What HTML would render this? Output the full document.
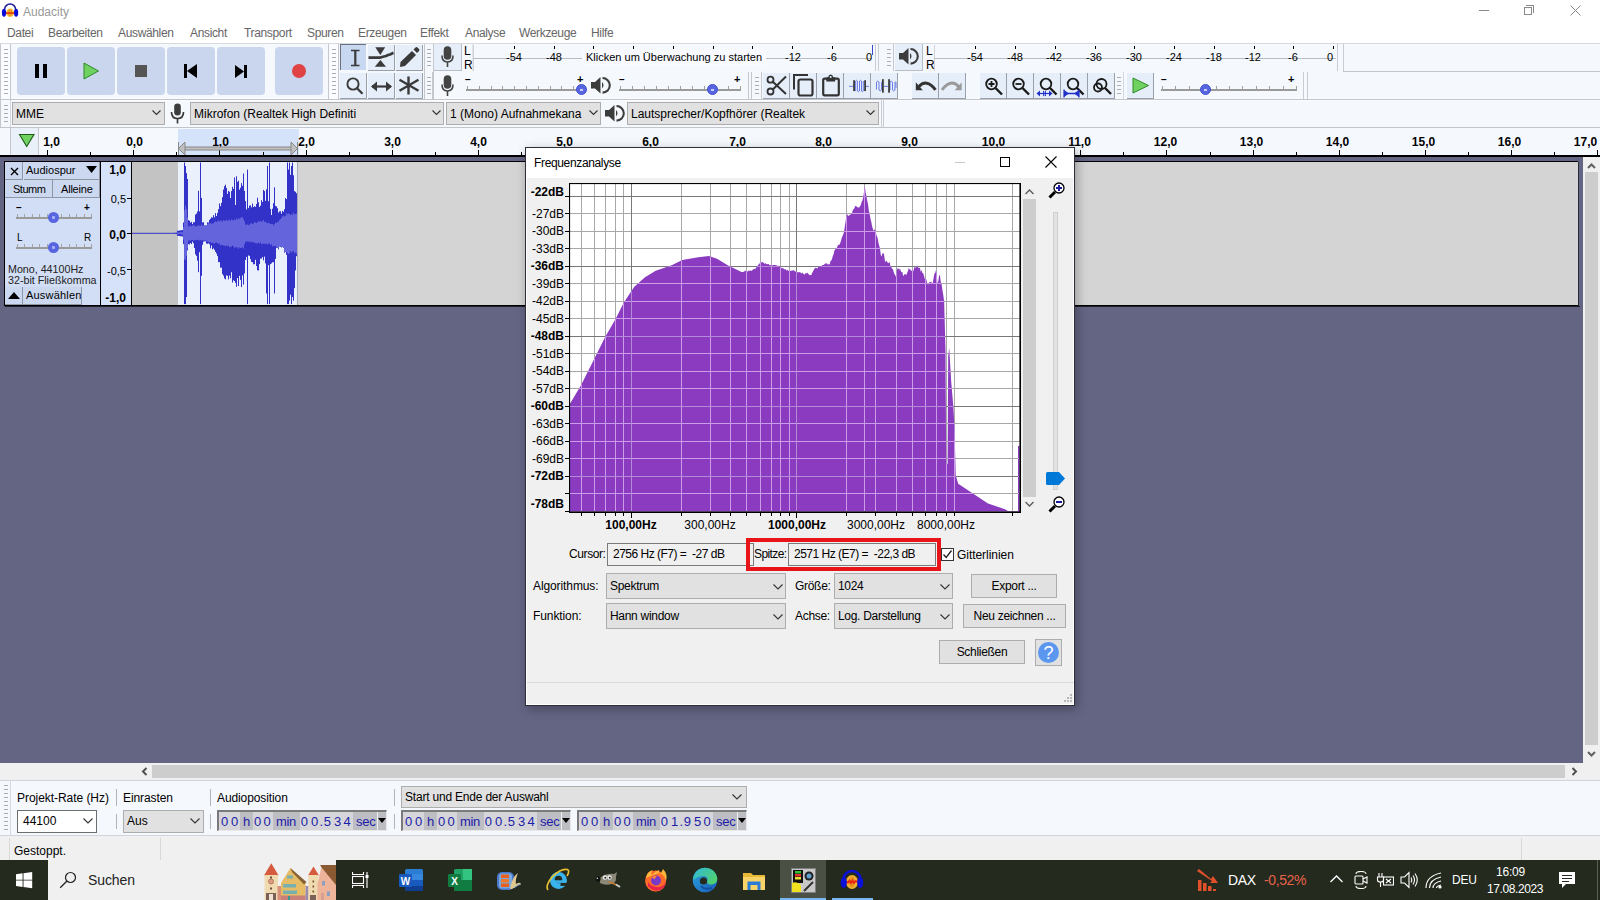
<!DOCTYPE html>
<html><head><meta charset="utf-8">
<style>

*{margin:0;padding:0;box-sizing:border-box}
html,body{width:1600px;height:900px;overflow:hidden;background:#fff;font-family:"Liberation Sans",sans-serif;font-size:12px;color:#000}
.a{position:absolute}
.t{position:absolute;white-space:nowrap;line-height:1}
#title{left:0;top:0;width:1600px;height:22px;background:#fff}
#menu{left:0;top:22px;width:1600px;height:21px;background:#fff}
#tb{left:0;top:43px;width:1600px;height:85px;background:#f5f8fd;border-top:1px solid #d6d9de}
#ruler{left:0;top:128px;width:1600px;height:27px;background:#f5f8fd}
#trackarea{left:0;top:155px;width:1583px;height:608px;background:#636583}
#hscroll{left:0;top:763px;width:1600px;height:17px;background:#f0f0f0}
#selbar{left:0;top:780px;width:1600px;height:58px;background:#f5f8fd;border-top:1px solid #d6d9de}
#status{left:0;top:838px;width:1600px;height:22px;background:#f0f0f0;border-top:1px solid #d9d9d9}
#taskbar{left:0;top:860px;width:1600px;height:40px;background:#20281b}
.btn{position:absolute;background:#c9d6ee;border-radius:4px}
.grab{position:absolute;width:4px;background:repeating-linear-gradient(to bottom,#aaaeb4 0,#aaaeb4 1px,transparent 1px,transparent 4px)}
.combo{position:absolute;background:#e5e5e5;border:1px solid #adadad}
.combo .ar{position:absolute;right:6px;top:50%;width:7px;height:7px;border-right:1px solid #333;border-bottom:1px solid #333;transform:translateY(-70%) rotate(45deg)}
.sep{position:absolute;width:1px;background:#c4c8ce}
.rt{position:absolute;font-weight:bold;font-size:12px;line-height:1}
.tk{position:absolute;width:1px;background:#000}

</style></head><body>


<!-- TITLE BAR -->
<div id="title" class="a">
  <svg class="a" style="left:0;top:0" width="22" height="20">
    <path d="M4.6 9.5 A5.5 5.5 0 0 1 15.6 9.5" fill="none" stroke="#1c1c9a" stroke-width="1.5"/>
    <ellipse cx="10.1" cy="12.7" rx="4" ry="4.3" fill="#f8c040"/>
    <ellipse cx="10.1" cy="12.7" rx="2.2" ry="3.6" fill="#f0a020"/>
    <rect x="6" y="12.3" width="8.2" height="1.6" fill="#e83010"/>
    <ellipse cx="4" cy="12.8" rx="2.1" ry="4" fill="#0a0ad8"/>
    <ellipse cx="16.1" cy="12.8" rx="2.1" ry="4" fill="#0a0ad8"/>
  </svg>
  <div class="t" style="left:23px;top:6px;color:#999">Audacity</div>
  <div class="a" style="left:1479px;top:10px;width:10px;height:1px;background:#8a8a8a"></div>
  <div class="a" style="left:1524px;top:7px;width:8px;height:8px;border:1px solid #8a8a8a"></div>
  <div class="a" style="left:1526px;top:5px;width:8px;height:8px;border-top:1px solid #8a8a8a;border-right:1px solid #8a8a8a"></div>
  <svg class="a" style="left:1570px;top:5px" width="11" height="11"><path d="M0.5 0.5L10.5 10.5M10.5 0.5L0.5 10.5" stroke="#8a8a8a" stroke-width="1"/></svg>
</div>

<!-- MENU -->
<div id="menu" class="a" style="color:#666;letter-spacing:-0.35px">
  <div class="t" style="left:7px;top:5px">Datei</div>
  <div class="t" style="left:48px;top:5px">Bearbeiten</div>
  <div class="t" style="left:118px;top:5px">Auswählen</div>
  <div class="t" style="left:190px;top:5px">Ansicht</div>
  <div class="t" style="left:244px;top:5px">Transport</div>
  <div class="t" style="left:307px;top:5px">Spuren</div>
  <div class="t" style="left:358px;top:5px">Erzeugen</div>
  <div class="t" style="left:420px;top:5px">Effekt</div>
  <div class="t" style="left:465px;top:5px">Analyse</div>
  <div class="t" style="left:519px;top:5px">Werkzeuge</div>
  <div class="t" style="left:591px;top:5px">Hilfe</div>
</div>


<div id="tb" class="a"></div>
<div id="ruler" class="a"></div>
<div id="trackarea" class="a"></div>
<div id="hscroll" class="a"></div>
<div id="selbar" class="a"></div>

<div id="taskbar" class="a"></div>
<div id="tbc" class="a" style="left:0;top:0">
  <!-- row separator lines -->
  <div class="a" style="left:0;top:98px;width:1600px;height:3px;background:#fafcff;border-top:1px solid #fafcff"></div>
  <div class="a" style="left:0;top:99px;width:1600px;height:1px;background:#c2c5ca"></div>
  <div class="a" style="left:1343px;top:71px;width:257px;height:1px;background:#c2c5ca"></div>
  <div class="a" style="left:0;top:127px;width:1600px;height:1px;background:#c2c5ca"></div>
  <!-- transport -->
  <div class="sep" style="left:0;top:44px;height:84px"></div>
  <div class="sep" style="left:328px;top:44px;height:55px"></div>
  <div class="sep" style="left:424px;top:44px;height:55px"></div>
  <div class="a" style="left:329px;top:44px;width:9px;height:55px;background:#fafcff"></div>
  <div class="a" style="left:1px;top:44px;width:9px;height:55px;background:#fafcff"></div>
  <div class="grab" style="left:4px;top:49px;height:46px"></div>
  <div class="sep" style="left:10px;top:44px;height:55px"></div>
  <div class="btn" style="left:17px;top:47px;width:48px;height:48px"></div>
  <div class="btn" style="left:67px;top:47px;width:48px;height:48px"></div>
  <div class="btn" style="left:117px;top:47px;width:48px;height:48px"></div>
  <div class="btn" style="left:167px;top:47px;width:48px;height:48px"></div>
  <div class="btn" style="left:217px;top:47px;width:48px;height:48px"></div>
  <div class="btn" style="left:275px;top:47px;width:48px;height:48px"></div>
  <div class="a" style="left:35px;top:64px;width:4px;height:14px;background:#000"></div>
  <div class="a" style="left:43px;top:64px;width:4px;height:14px;background:#000"></div>
  <svg class="a" style="left:83px;top:62px" width="17" height="18"><path d="M1 1L1 17L15.5 9Z" fill="#6fd160" stroke="#2f8a2a" stroke-width="1"/></svg>
  <div class="a" style="left:135px;top:65px;width:12px;height:12px;background:#555"></div>
  <div class="a" style="left:184px;top:64px;width:3px;height:14px;background:#000"></div>
  <svg class="a" style="left:186px;top:64px" width="12" height="14"><path d="M11 0L11 14L1 7Z" fill="#000"/></svg>
  <svg class="a" style="left:235px;top:65px" width="10" height="13"><path d="M0 0L0 13L9 6.5Z" fill="#000"/></svg>
  <div class="a" style="left:244px;top:65px;width:3px;height:13px;background:#000"></div>
  <div class="a" style="left:292px;top:64px;width:14px;height:14px;border-radius:50%;background:#e04343"></div>
  <!-- tools -->
  <div class="grab" style="left:332px;top:49px;height:46px"></div>
  <div class="sep" style="left:338px;top:44px;height:55px"></div>
  <div class="a" style="left:340px;top:44px;width:26px;height:26px;background:#c8d8f0;border-top:1px solid #6a7080;border-left:1px solid #6a7080"></div>
  <div class="a" style="left:368px;top:45px;width:27px;height:26px;background:#e6eefa;border-right:1px solid #9aa0aa;border-bottom:1px solid #9aa0aa"></div>
  <div class="a" style="left:396px;top:45px;width:27px;height:26px;background:#e6eefa;border-right:1px solid #9aa0aa;border-bottom:1px solid #9aa0aa"></div>
  <div class="a" style="left:340px;top:73px;width:27px;height:26px;background:#e6eefa;border-right:1px solid #9aa0aa;border-bottom:1px solid #9aa0aa"></div>
  <div class="a" style="left:368px;top:73px;width:27px;height:26px;background:#e6eefa;border-right:1px solid #9aa0aa;border-bottom:1px solid #9aa0aa"></div>
  <div class="a" style="left:396px;top:73px;width:27px;height:26px;background:#e6eefa;border-right:1px solid #9aa0aa;border-bottom:1px solid #9aa0aa"></div>
  <svg class="a" style="left:340px;top:44px" width="84" height="56">
    <g fill="#3a3a3a" stroke="#3a3a3a">
      <path d="M11 6.5H19.5M11 21.5H19.5" stroke-width="1.4" fill="none"/>
      <rect x="14.2" y="6" width="2.2" height="16" stroke="none"/>
      <path d="M35.3 3.3H45.2L40.3 11Z" stroke="none"/>
      <path d="M34.8 22.8H46L40.4 16Z" stroke="none"/>
      <path d="M28.5 13.6H40.5L42 13L44 12.5L46 12L48 11L50 10.5L52 9.5L53.5 8.8" stroke-width="2.6" fill="none" stroke-linejoin="bevel"/>
      <path d="M60 23L60.5 18L72 7L76 11L65 22Z" stroke="none"/><path d="M73.5 5.5L75.5 3.5Q76.5 2.5 77.5 3.5L79 5Q80 6 79 7L77 9Z" stroke="none"/>
      <circle cx="13" cy="40" r="5.6" fill="none" stroke-width="1.9"/>
      <path d="M17 44.2L22.5 49.7" stroke-width="2.3"/>
      <path d="M32 42.5H51" stroke-width="2.2" fill="none"/>
      <path d="M31 42.5L37 37.5V47.5Z M52 42.5L46 37.5V47.5Z" stroke="none"/>
      <path d="M68.5 32.5V50.5M59.5 35.8L78.5 46.8M78.5 35.8L59.5 46.8" stroke-width="2.4" fill="none"/>
    </g>
  </svg>
  <!-- record meter -->
  <div class="grab" style="left:427px;top:49px;height:20px"></div>
  <div class="grab" style="left:427px;top:77px;height:20px"></div>
  <div class="sep" style="left:433px;top:44px;height:55px"></div>
  <div class="a" style="left:434px;top:44px;width:28px;height:27px;background:#e6eefa;border-right:1px solid #b8bec8;border-bottom:1px solid #b8bec8"></div>
  <svg class="a" style="left:440px;top:46px" width="16" height="22"><g fill="none" stroke="#444" stroke-width="1.6"><rect x="4.5" y="1" width="6" height="12" rx="3" fill="#444"/><path d="M2 9.5Q2 16 7.5 16Q13 16 13 9.5"/><path d="M7.5 16V21"/></g></svg>
  <svg class="a" style="left:440px;top:75px" width="16" height="22"><g fill="none" stroke="#444" stroke-width="1.6"><rect x="4.5" y="1" width="6" height="12" rx="3" fill="#444"/><path d="M2 9.5Q2 16 7.5 16Q13 16 13 9.5"/><path d="M7.5 16V21"/></g></svg>
  <div class="t" style="left:464px;top:45px;font-size:12px">L</div>
  <div class="t" style="left:464px;top:59px;font-size:12px">R</div>
  <div class="a" style="left:472px;top:44px;width:1px;height:27px;background:#e0e4ea"></div>
  <div class="a" style="left:473px;top:45px;width:400px;height:13px;border-left:1px solid #d0d4da"></div>
  <div class="a" style="left:473px;top:58px;width:109px;height:1px;background:#b8bcc4"></div>
  <div class="a" style="left:473px;top:59px;width:400px;height:12px;border-left:1px solid #d0d4da"></div>
  <div class="a" style="left:766px;top:58px;width:106px;height:1px;background:#b8bcc4"></div>
  <div class="a" style="left:582px;top:50px;width:184px;height:16px;background:#f8faff"></div>
  <div class="t" style="left:586px;top:52px;font-size:11px">Klicken um Überwachung zu starten</div>
  <div class="a" style="left:514px;top:46px;width:1px;height:3px;background:#000"></div><div class="t" style="left:494px;top:52px;width:40px;text-align:center;font-size:11px">-54</div><div class="a" style="left:554px;top:46px;width:1px;height:3px;background:#000"></div><div class="t" style="left:534px;top:52px;width:40px;text-align:center;font-size:11px">-48</div><div class="a" style="left:593px;top:46px;width:1px;height:3px;background:#000"></div><div class="a" style="left:633px;top:46px;width:1px;height:3px;background:#000"></div><div class="a" style="left:673px;top:46px;width:1px;height:3px;background:#000"></div><div class="a" style="left:713px;top:46px;width:1px;height:3px;background:#000"></div><div class="a" style="left:752px;top:46px;width:1px;height:3px;background:#000"></div><div class="a" style="left:792px;top:46px;width:1px;height:3px;background:#000"></div><div class="t" style="left:773px;top:52px;width:40px;text-align:center;font-size:11px">-12</div><div class="a" style="left:832px;top:46px;width:1px;height:3px;background:#000"></div><div class="t" style="left:812px;top:52px;width:40px;text-align:center;font-size:11px">-6</div><div class="a" style="left:872px;top:46px;width:1px;height:3px;background:#000"></div><div class="t" style="left:849px;top:52px;width:40px;text-align:center;font-size:11px">0</div>
  <div class="a" style="left:872px;top:45px;width:1px;height:10px;background:#3a46d0"></div>
  <div class="a" style="left:875px;top:44px;width:1px;height:27px;background:#c8ccd4"></div>
  <div class="a" style="left:878px;top:44px;width:1px;height:27px;background:#c8ccd4"></div>
  <!-- play meter -->
  <div class="grab" style="left:887px;top:49px;height:20px"></div>
  <div class="sep" style="left:893px;top:44px;height:27px"></div>
  <div class="a" style="left:895px;top:44px;width:28px;height:27px;background:#e6eefa;border-right:1px solid #b8bec8;border-bottom:1px solid #b8bec8"></div>
  <svg class="a" style="left:898px;top:47px" width="22" height="20"><path d="M1 6H5L10.5 1V17.5L5 12.5H1Z" fill="#3c3c3c"/><path d="M12 6Q15 9.2 12 12.5Z" fill="#3c3c3c"/><path d="M12.5 2A7.3 7.3 0 0 1 12.5 16.6" fill="none" stroke="#3c3c3c" stroke-width="2.1"/></svg>
  <div class="t" style="left:926px;top:45px;font-size:12px">L</div>
  <div class="t" style="left:926px;top:59px;font-size:12px">R</div>
  <div class="a" style="left:934px;top:45px;width:1px;height:26px;background:#d0d4da"></div>
  <div class="a" style="left:934px;top:58px;width:402px;height:1px;background:#b8bcc4"></div>
  <div class="a" style="left:975px;top:46px;width:1px;height:3px;background:#000"></div><div class="t" style="left:955px;top:52px;width:40px;text-align:center;font-size:11px">-54</div><div class="a" style="left:1015px;top:46px;width:1px;height:3px;background:#000"></div><div class="t" style="left:995px;top:52px;width:40px;text-align:center;font-size:11px">-48</div><div class="a" style="left:1055px;top:46px;width:1px;height:3px;background:#000"></div><div class="t" style="left:1034px;top:52px;width:40px;text-align:center;font-size:11px">-42</div><div class="a" style="left:1095px;top:46px;width:1px;height:3px;background:#000"></div><div class="t" style="left:1074px;top:52px;width:40px;text-align:center;font-size:11px">-36</div><div class="a" style="left:1134px;top:46px;width:1px;height:3px;background:#000"></div><div class="t" style="left:1114px;top:52px;width:40px;text-align:center;font-size:11px">-30</div><div class="a" style="left:1174px;top:46px;width:1px;height:3px;background:#000"></div><div class="t" style="left:1154px;top:52px;width:40px;text-align:center;font-size:11px">-24</div><div class="a" style="left:1214px;top:46px;width:1px;height:3px;background:#000"></div><div class="t" style="left:1194px;top:52px;width:40px;text-align:center;font-size:11px">-18</div><div class="a" style="left:1254px;top:46px;width:1px;height:3px;background:#000"></div><div class="t" style="left:1233px;top:52px;width:40px;text-align:center;font-size:11px">-12</div><div class="a" style="left:1293px;top:46px;width:1px;height:3px;background:#000"></div><div class="t" style="left:1273px;top:52px;width:40px;text-align:center;font-size:11px">-6</div><div class="a" style="left:1333px;top:46px;width:1px;height:3px;background:#000"></div><div class="t" style="left:1310px;top:52px;width:40px;text-align:center;font-size:11px">0</div>
  <div class="a" style="left:1337px;top:44px;width:1px;height:27px;background:#c8ccd4"></div>
  <div class="a" style="left:1343px;top:44px;width:1px;height:27px;background:#c8ccd4"></div>
  <!-- mixer row -->
  <div class="sep" style="left:432px;top:72px;height:27px"></div>
  <div class="t" style="left:465px;top:75px;font-size:10px;font-weight:bold">&#8211;</div><div class="t" style="left:577px;top:74px;font-size:11px;font-weight:bold">+</div><div class="a" style="left:466px;top:89px;width:120px;height:2px;background:#9a9a9a"></div><div class="a" style="left:467px;top:86px;width:1px;height:3px;background:#a0a0a0"></div><div class="a" style="left:479px;top:86px;width:1px;height:3px;background:#a0a0a0"></div><div class="a" style="left:491px;top:86px;width:1px;height:3px;background:#a0a0a0"></div><div class="a" style="left:502px;top:86px;width:1px;height:3px;background:#a0a0a0"></div><div class="a" style="left:514px;top:86px;width:1px;height:3px;background:#a0a0a0"></div><div class="a" style="left:526px;top:86px;width:1px;height:3px;background:#a0a0a0"></div><div class="a" style="left:538px;top:86px;width:1px;height:3px;background:#a0a0a0"></div><div class="a" style="left:550px;top:86px;width:1px;height:3px;background:#a0a0a0"></div><div class="a" style="left:561px;top:86px;width:1px;height:3px;background:#a0a0a0"></div><div class="a" style="left:573px;top:86px;width:1px;height:3px;background:#a0a0a0"></div><div class="a" style="left:585px;top:86px;width:1px;height:3px;background:#a0a0a0"></div><div class="a" style="left:576px;top:84px;width:11px;height:11px;border-radius:50%;background:#5865e0;border:1px solid #4050d0"><div class="a" style="left:3px;top:4px;width:3px;height:2px;background:#c8ccf8"></div></div><div class="t" style="left:619px;top:75px;font-size:10px;font-weight:bold">&#8211;</div><div class="t" style="left:734px;top:74px;font-size:11px;font-weight:bold">+</div><div class="a" style="left:619px;top:89px;width:122px;height:2px;background:#9a9a9a"></div><div class="a" style="left:620px;top:86px;width:1px;height:3px;background:#a0a0a0"></div><div class="a" style="left:632px;top:86px;width:1px;height:3px;background:#a0a0a0"></div><div class="a" style="left:644px;top:86px;width:1px;height:3px;background:#a0a0a0"></div><div class="a" style="left:656px;top:86px;width:1px;height:3px;background:#a0a0a0"></div><div class="a" style="left:668px;top:86px;width:1px;height:3px;background:#a0a0a0"></div><div class="a" style="left:680px;top:86px;width:1px;height:3px;background:#a0a0a0"></div><div class="a" style="left:692px;top:86px;width:1px;height:3px;background:#a0a0a0"></div><div class="a" style="left:704px;top:86px;width:1px;height:3px;background:#a0a0a0"></div><div class="a" style="left:716px;top:86px;width:1px;height:3px;background:#a0a0a0"></div><div class="a" style="left:728px;top:86px;width:1px;height:3px;background:#a0a0a0"></div><div class="a" style="left:740px;top:86px;width:1px;height:3px;background:#a0a0a0"></div><div class="a" style="left:707px;top:84px;width:11px;height:11px;border-radius:50%;background:#5865e0;border:1px solid #4050d0"><div class="a" style="left:3px;top:4px;width:3px;height:2px;background:#c8ccf8"></div></div>
  <svg class="a" style="left:590px;top:76px" width="22" height="20"><path d="M1 6H5L10.5 1V17.5L5 12.5H1Z" fill="#3c3c3c"/><path d="M12 6Q15 9.2 12 12.5Z" fill="#3c3c3c"/><path d="M12.5 2A7.3 7.3 0 0 1 12.5 16.6" fill="none" stroke="#3c3c3c" stroke-width="2.1"/></svg>
  <div class="sep" style="left:748px;top:72px;height:27px"></div>
  <div class="sep" style="left:751px;top:72px;height:27px"></div>
  <!-- edit -->
  <div class="grab" style="left:755px;top:77px;height:20px"></div>
  <div class="sep" style="left:761px;top:72px;height:27px"></div>
  <div class="t" style="left:1161px;top:75px;font-size:10px;font-weight:bold">&#8211;</div><div class="t" style="left:1288px;top:74px;font-size:11px;font-weight:bold">+</div><div class="a" style="left:1161px;top:89px;width:136px;height:2px;background:#9a9a9a"></div><div class="a" style="left:1162px;top:86px;width:1px;height:3px;background:#a0a0a0"></div><div class="a" style="left:1175px;top:86px;width:1px;height:3px;background:#a0a0a0"></div><div class="a" style="left:1189px;top:86px;width:1px;height:3px;background:#a0a0a0"></div><div class="a" style="left:1202px;top:86px;width:1px;height:3px;background:#a0a0a0"></div><div class="a" style="left:1216px;top:86px;width:1px;height:3px;background:#a0a0a0"></div><div class="a" style="left:1229px;top:86px;width:1px;height:3px;background:#a0a0a0"></div><div class="a" style="left:1242px;top:86px;width:1px;height:3px;background:#a0a0a0"></div><div class="a" style="left:1256px;top:86px;width:1px;height:3px;background:#a0a0a0"></div><div class="a" style="left:1269px;top:86px;width:1px;height:3px;background:#a0a0a0"></div><div class="a" style="left:1283px;top:86px;width:1px;height:3px;background:#a0a0a0"></div><div class="a" style="left:1296px;top:86px;width:1px;height:3px;background:#a0a0a0"></div><div class="a" style="left:1200px;top:84px;width:11px;height:11px;border-radius:50%;background:#5865e0;border:1px solid #4050d0"><div class="a" style="left:3px;top:4px;width:3px;height:2px;background:#c8ccf8"></div></div><div class="a" style="left:763px;top:73px;width:27px;height:26px;background:#e6eefa;border-right:1px solid #9aa0aa;border-bottom:1px solid #9aa0aa"></div><div class="a" style="left:790px;top:73px;width:27px;height:26px;background:#e6eefa;border-right:1px solid #9aa0aa;border-bottom:1px solid #9aa0aa"></div><div class="a" style="left:817px;top:73px;width:27px;height:26px;background:#e6eefa;border-right:1px solid #9aa0aa;border-bottom:1px solid #9aa0aa"></div><div class="a" style="left:844px;top:73px;width:27px;height:26px;background:#e6eefa;border-right:1px solid #9aa0aa;border-bottom:1px solid #9aa0aa"></div><div class="a" style="left:871px;top:73px;width:27px;height:26px;background:#e6eefa;border-right:1px solid #9aa0aa;border-bottom:1px solid #9aa0aa"></div><div class="a" style="left:912px;top:73px;width:27px;height:26px;background:#e6eefa;border-right:1px solid #9aa0aa;border-bottom:1px solid #9aa0aa"></div><div class="a" style="left:939px;top:73px;width:27px;height:26px;background:#e6eefa;border-right:1px solid #9aa0aa;border-bottom:1px solid #9aa0aa"></div><div class="a" style="left:980px;top:73px;width:27px;height:26px;background:#e6eefa;border-right:1px solid #9aa0aa;border-bottom:1px solid #9aa0aa"></div><div class="a" style="left:1007px;top:73px;width:27px;height:26px;background:#e6eefa;border-right:1px solid #9aa0aa;border-bottom:1px solid #9aa0aa"></div><div class="a" style="left:1034px;top:73px;width:27px;height:26px;background:#e6eefa;border-right:1px solid #9aa0aa;border-bottom:1px solid #9aa0aa"></div><div class="a" style="left:1061px;top:73px;width:27px;height:26px;background:#e6eefa;border-right:1px solid #9aa0aa;border-bottom:1px solid #9aa0aa"></div><div class="a" style="left:1088px;top:73px;width:27px;height:26px;background:#e6eefa;border-right:1px solid #9aa0aa;border-bottom:1px solid #9aa0aa"></div><div class="a" style="left:1127px;top:73px;width:27px;height:26px;background:#e6eefa;border-right:1px solid #9aa0aa;border-bottom:1px solid #9aa0aa"></div><svg class="a" style="left:760px;top:70px" width="140" height="30"><g fill="none" stroke="#333" stroke-width="1.8">
<circle cx="10.5" cy="9.7" r="3"/><circle cx="10.5" cy="21.5" r="3"/>
<path d="M12.8 19.5L26 6.5M12.8 11.7L26 24" stroke-width="2"/>
<path d="M34 19.5V5H48" stroke-width="2"/>
<rect x="38.5" y="9.5" width="14" height="16" rx="2" stroke-width="2.2"/>
<rect x="63.2" y="8.7" width="15.6" height="16.6" rx="1.5" stroke-width="2.2"/>
</g>
<path d="M66.3 7.2H68.2Q68.5 4.5 70.7 4.5Q72.9 4.5 73.2 7.2H75.2V11.4H66.3Z" fill="#333"/><circle cx="70.7" cy="7" r="1" fill="#e6eefa"/>
<g stroke="#6d7de6" stroke-width="1" fill="none"><path d="M89 16.35H93M106 16.35H109"/>
<path d="M95.6 21 V11 Q96.5 9.6 97.4 11 V21 Q98.4 22.4 99.5 21 V11 Q100.5 9.6 101.5 11 V21 Q102.4 22.4 103.3 21 V11"/>
<path d="M116.5 19.5V12Q117.7 10.2 119 12V20Q120.2 21.8 121.5 20V12.5L122 11.5"/>
<path d="M124 16.35H128"/>
<path d="M130 20V12Q131.2 10.2 132.5 12V20Q133.7 21.8 135 20V12.5Q135.4 11.5 136 12V18"/></g>
<g fill="#3a3a3a"><rect x="93.15" y="10.2" width="1.8" height="10.9"/><rect x="104.2" y="10.2" width="1.8" height="10.9"/><rect x="122" y="9.2" width="1.8" height="13.45"/><rect x="128.15" y="9.2" width="1.8" height="13.45"/></g>
</svg><svg class="a" style="left:905px;top:70px" width="255" height="30"><g>
<path d="M10.8 12.3V20.3H17.8Z" fill="#333"/><path d="M13.5 17Q21.5 8 30.5 19.8" fill="none" stroke="#333" stroke-width="3"/>
<path d="M56.7 12.3V20.3H49.7Z" fill="#9a9a9a"/><path d="M54 17Q46 8 37 19.8" fill="none" stroke="#9a9a9a" stroke-width="3"/>
</g>
<g fill="none" stroke="#1a1a1a" stroke-width="1.8">
<circle cx="86.5" cy="14" r="5.3"/><path d="M90.5 18L97 24.5" stroke-width="2.4"/><path d="M83.5 14H89.5M86.5 11V17"/>
<circle cx="113.5" cy="14" r="5.3"/><path d="M117.5 18L124 24.5" stroke-width="2.4"/><path d="M110.5 14H116.5"/>
<circle cx="141" cy="14" r="5.3"/><path d="M145 18L151.5 24.5" stroke-width="2.4"/>
<circle cx="168" cy="14" r="5.3"/><path d="M172 18L178.5 24.5" stroke-width="2.4"/>
<circle cx="196.5" cy="14" r="5"/><circle cx="193" cy="17.5" r="4"/><path d="M200 18L206 24" stroke-width="2.4"/>
</g>
<g fill="#2030c8" stroke="#2030c8"><path d="M133 23.5H146" stroke-width="1.2"/><path d="M131.5 23.5L135 20.5V26.5Z M147.5 23.5L144 20.5V26.5Z M138 23.5L141 20.5V26.5Z M141 23.5L138 20.5V26.5Z" stroke="none"/>
<path d="M160 23.5H173" stroke-width="1.5"/><path d="M159 20V27L164 23.5Z M174 20V27L169 23.5Z" stroke="none"/><path d="M159 19.5V27.5M174 19.5V27.5" stroke-width="1.2"/></g>
</svg><div class="grab" style="left:1117px;top:77px;height:20px;width:4px"></div><div class="a" style="left:1123px;top:72px;width:1px;height:27px;background:#d4d8e0"></div><svg class="a" style="left:1132px;top:77px" width="18" height="17"><path d="M1 1L1 16L16.5 8.5Z" fill="#6fd160" stroke="#2f8a2a" stroke-width="1"/></svg><div class="a" style="left:1303px;top:72px;width:1px;height:27px;background:#c8ccd4"></div><div class="a" style="left:1307px;top:72px;width:1px;height:27px;background:#c8ccd4"></div>
</div>
<div class="grab" style="left:4px;top:105px;height:18px;width:4px"></div><div class="a" style="left:10px;top:100px;width:1px;height:27px;background:#d4d8e0"></div><div class="a" style="left:12px;top:102px;width:153px;height:23px;background:#e1e1e1;border:1px solid #adadad"></div><svg class="a" style="left:152px;top:110px" width="9" height="6"><path d="M0.5 0.5L4.5 4.5L8.5 0.5" fill="none" stroke="#333" stroke-width="1.1"/></svg><div class="t" style="left:16px;top:108px">MME</div><svg class="a" style="left:170px;top:103px" width="16" height="21"><g fill="none" stroke="#3c3c3c" stroke-width="1.7"><rect x="4.2" y="0.5" width="6.6" height="12" rx="3.3" fill="#3c3c3c" stroke="none"/><path d="M1.5 9Q1.5 15.5 7.5 15.5Q13.5 15.5 13.5 9"/><path d="M7.5 15.5V20.5"/></g></svg><div class="a" style="left:190px;top:102px;width:254px;height:23px;background:#e1e1e1;border:1px solid #adadad"></div><svg class="a" style="left:432px;top:110px" width="9" height="6"><path d="M0.5 0.5L4.5 4.5L8.5 0.5" fill="none" stroke="#333" stroke-width="1.1"/></svg><div class="t" style="left:194px;top:108px">Mikrofon (Realtek High Definiti</div><div class="a" style="left:446px;top:102px;width:155px;height:23px;background:#e1e1e1;border:1px solid #adadad"></div><svg class="a" style="left:589px;top:110px" width="9" height="6"><path d="M0.5 0.5L4.5 4.5L8.5 0.5" fill="none" stroke="#333" stroke-width="1.1"/></svg><div class="t" style="left:450px;top:108px">1 (Mono) Aufnahmekana</div><svg class="a" style="left:604px;top:104px" width="22" height="20"><path d="M1 6H5L10.5 1V17.5L5 12.5H1Z" fill="#3c3c3c"/><path d="M12 6Q15 9.2 12 12.5Z" fill="#3c3c3c"/><path d="M12.5 2A7.3 7.3 0 0 1 12.5 16.6" fill="none" stroke="#3c3c3c" stroke-width="2.1"/></svg><div class="a" style="left:627px;top:102px;width:252px;height:23px;background:#e1e1e1;border:1px solid #adadad"></div><svg class="a" style="left:866px;top:110px" width="9" height="6"><path d="M0.5 0.5L4.5 4.5L8.5 0.5" fill="none" stroke="#333" stroke-width="1.1"/></svg><div class="t" style="left:631px;top:108px">Lautsprecher/Kopfhörer (Realtek</div><div class="a" style="left:881px;top:100px;width:1px;height:27px;background:#c8ccd4"></div><div class="a" style="left:883px;top:100px;width:1px;height:27px;background:#c8ccd4"></div><div class="a" style="left:11px;top:128px;width:28px;height:27px;background:#eaf0fa"></div><div class="a" style="left:10px;top:128px;width:1px;height:27px;background:#c4c8ce"></div><div class="a" style="left:38px;top:128px;width:1px;height:27px;background:#c4c8ce"></div><svg class="a" style="left:18px;top:133px" width="18" height="15"><path d="M1.5 1.5H16L8.7 13.5Z" fill="#6fd160" stroke="#1f5a1a" stroke-width="1.1"/></svg><div class="a" style="left:178px;top:129px;width:121px;height:26px;background:#d4e2fa"></div><div class="a" style="left:47px;top:150px;width:1px;height:5px;background:#000"></div><div class="a" style="left:90px;top:152px;width:1px;height:3px;background:#000"></div><div class="t" style="left:21px;top:136px;width:61px;text-align:center;font-weight:bold;font-size:12px">1,0</div><div class="a" style="left:133px;top:150px;width:1px;height:5px;background:#000"></div><div class="a" style="left:176px;top:152px;width:1px;height:3px;background:#000"></div><div class="t" style="left:104px;top:136px;width:61px;text-align:center;font-weight:bold;font-size:12px">0,0</div><div class="a" style="left:219px;top:150px;width:1px;height:5px;background:#000"></div><div class="a" style="left:263px;top:152px;width:1px;height:3px;background:#000"></div><div class="t" style="left:190px;top:136px;width:61px;text-align:center;font-weight:bold;font-size:12px">1,0</div><div class="a" style="left:306px;top:150px;width:1px;height:5px;background:#000"></div><div class="a" style="left:349px;top:152px;width:1px;height:3px;background:#000"></div><div class="t" style="left:276px;top:136px;width:61px;text-align:center;font-weight:bold;font-size:12px">2,0</div><div class="a" style="left:392px;top:150px;width:1px;height:5px;background:#000"></div><div class="a" style="left:435px;top:152px;width:1px;height:3px;background:#000"></div><div class="t" style="left:362px;top:136px;width:61px;text-align:center;font-weight:bold;font-size:12px">3,0</div><div class="a" style="left:478px;top:150px;width:1px;height:5px;background:#000"></div><div class="a" style="left:521px;top:152px;width:1px;height:3px;background:#000"></div><div class="t" style="left:448px;top:136px;width:61px;text-align:center;font-weight:bold;font-size:12px">4,0</div><div class="a" style="left:564px;top:150px;width:1px;height:5px;background:#000"></div><div class="a" style="left:607px;top:152px;width:1px;height:3px;background:#000"></div><div class="t" style="left:534px;top:136px;width:61px;text-align:center;font-weight:bold;font-size:12px">5,0</div><div class="a" style="left:650px;top:150px;width:1px;height:5px;background:#000"></div><div class="a" style="left:693px;top:152px;width:1px;height:3px;background:#000"></div><div class="t" style="left:620px;top:136px;width:61px;text-align:center;font-weight:bold;font-size:12px">6,0</div><div class="a" style="left:736px;top:150px;width:1px;height:5px;background:#000"></div><div class="a" style="left:779px;top:152px;width:1px;height:3px;background:#000"></div><div class="t" style="left:707px;top:136px;width:61px;text-align:center;font-weight:bold;font-size:12px">7,0</div><div class="a" style="left:822px;top:150px;width:1px;height:5px;background:#000"></div><div class="a" style="left:865px;top:152px;width:1px;height:3px;background:#000"></div><div class="t" style="left:793px;top:136px;width:61px;text-align:center;font-weight:bold;font-size:12px">8,0</div><div class="a" style="left:908px;top:150px;width:1px;height:5px;background:#000"></div><div class="a" style="left:951px;top:152px;width:1px;height:3px;background:#000"></div><div class="t" style="left:879px;top:136px;width:61px;text-align:center;font-weight:bold;font-size:12px">9,0</div><div class="a" style="left:994px;top:150px;width:1px;height:5px;background:#000"></div><div class="a" style="left:1037px;top:152px;width:1px;height:3px;background:#000"></div><div class="t" style="left:963px;top:136px;width:61px;text-align:center;font-weight:bold;font-size:12px">10,0</div><div class="a" style="left:1080px;top:150px;width:1px;height:5px;background:#000"></div><div class="a" style="left:1123px;top:152px;width:1px;height:3px;background:#000"></div><div class="t" style="left:1049px;top:136px;width:61px;text-align:center;font-weight:bold;font-size:12px">11,0</div><div class="a" style="left:1166px;top:150px;width:1px;height:5px;background:#000"></div><div class="a" style="left:1210px;top:152px;width:1px;height:3px;background:#000"></div><div class="t" style="left:1135px;top:136px;width:61px;text-align:center;font-weight:bold;font-size:12px">12,0</div><div class="a" style="left:1253px;top:150px;width:1px;height:5px;background:#000"></div><div class="a" style="left:1296px;top:152px;width:1px;height:3px;background:#000"></div><div class="t" style="left:1221px;top:136px;width:61px;text-align:center;font-weight:bold;font-size:12px">13,0</div><div class="a" style="left:1339px;top:150px;width:1px;height:5px;background:#000"></div><div class="a" style="left:1382px;top:152px;width:1px;height:3px;background:#000"></div><div class="t" style="left:1307px;top:136px;width:61px;text-align:center;font-weight:bold;font-size:12px">14,0</div><div class="a" style="left:1425px;top:150px;width:1px;height:5px;background:#000"></div><div class="a" style="left:1468px;top:152px;width:1px;height:3px;background:#000"></div><div class="t" style="left:1393px;top:136px;width:61px;text-align:center;font-weight:bold;font-size:12px">15,0</div><div class="a" style="left:1511px;top:150px;width:1px;height:5px;background:#000"></div><div class="a" style="left:1554px;top:152px;width:1px;height:3px;background:#000"></div><div class="t" style="left:1479px;top:136px;width:61px;text-align:center;font-weight:bold;font-size:12px">16,0</div><div class="a" style="left:1597px;top:150px;width:1px;height:5px;background:#000"></div><div class="t" style="left:1555px;top:136px;width:61px;text-align:center;font-weight:bold;font-size:12px">17,0</div><svg class="a" style="left:177px;top:141px" width="124" height="15"><g fill="#c0c0c0" stroke="#888" stroke-width="1"><rect x="6" y="6" width="110" height="3"/><path d="M8 1V14L1.5 7.5Z"/><path d="M114 1V14L120.5 7.5Z"/></g><path d="M1.5 1V14M120.5 1V14" stroke="#888"/></svg><div class="a" style="left:0px;top:155px;width:1600px;height:2px;background:#000"></div><div class="a" style="left:0px;top:157px;width:1583px;height:606px;background:#636583"></div><div class="a" style="left:4px;top:161px;width:1574px;height:145px;background:#000"></div><div class="a" style="left:1578px;top:162px;width:1px;height:145px;background:#2c2c3c"></div><div class="a" style="left:5px;top:306px;width:1575px;height:1px;background:#20202c"></div><div class="a" style="left:5px;top:162px;width:95px;height:143px;background:#d2def6"></div><div class="a" style="left:5px;top:162px;width:18px;height:18px;background:#cbd8f0;border-right:1px solid #8f96a6;border-bottom:1px solid #8f96a6"></div><div class="a" style="left:24px;top:162px;width:76px;height:18px;background:#cbd8f0;border-right:1px solid #8f96a6;border-bottom:1px solid #8f96a6"></div><div class="a" style="left:5px;top:180px;width:48px;height:18px;background:#cbd8f0;border-right:1px solid #8f96a6;border-bottom:1px solid #8f96a6"></div><div class="a" style="left:53px;top:180px;width:47px;height:18px;background:#cbd8f0;border-right:1px solid #8f96a6;border-bottom:1px solid #8f96a6"></div><svg class="a" style="left:10px;top:167px" width="9" height="9"><path d="M1 1L8 8M8 1L1 8" stroke="#000" stroke-width="1.4"/></svg><div class="t" style="left:26px;top:165px;font-size:11px;letter-spacing:0px">Audiospur</div><svg class="a" style="left:86px;top:166px" width="12" height="8"><path d="M0 0H11L5.5 7Z" fill="#000"/></svg><div class="t" style="left:13px;top:184px;font-size:11px;letter-spacing:-0.5px">Stumm</div><div class="t" style="left:61px;top:184px;font-size:11px;letter-spacing:-0.2px">Alleine</div><div class="t" style="left:16px;top:203px;font-size:10px;font-weight:bold">&#8211;</div><div class="t" style="left:84px;top:203px;font-size:10px;font-weight:bold">+</div><div class="a" style="left:16px;top:217px;width:76px;height:2px;background:#9a9a9a"></div><div class="a" style="left:17px;top:214px;width:1px;height:3px;background:#a4a4a4"></div><div class="a" style="left:24px;top:214px;width:1px;height:3px;background:#a4a4a4"></div><div class="a" style="left:32px;top:214px;width:1px;height:3px;background:#a4a4a4"></div><div class="a" style="left:39px;top:214px;width:1px;height:3px;background:#a4a4a4"></div><div class="a" style="left:47px;top:214px;width:1px;height:3px;background:#a4a4a4"></div><div class="a" style="left:54px;top:214px;width:1px;height:3px;background:#a4a4a4"></div><div class="a" style="left:61px;top:214px;width:1px;height:3px;background:#a4a4a4"></div><div class="a" style="left:69px;top:214px;width:1px;height:3px;background:#a4a4a4"></div><div class="a" style="left:76px;top:214px;width:1px;height:3px;background:#a4a4a4"></div><div class="a" style="left:84px;top:214px;width:1px;height:3px;background:#a4a4a4"></div><div class="a" style="left:91px;top:214px;width:1px;height:3px;background:#a4a4a4"></div><div class="a" style="left:48px;top:212px;width:11px;height:11px;border-radius:50%;background:#5865e0"><div class="a" style="left:4px;top:4px;width:3px;height:3px;background:#aab0f0;border-radius:1px"></div></div><div class="t" style="left:17px;top:233px;font-size:10px">L</div><div class="t" style="left:84px;top:233px;font-size:10px">R</div><div class="a" style="left:16px;top:247px;width:76px;height:2px;background:#9a9a9a"></div><div class="a" style="left:17px;top:244px;width:1px;height:3px;background:#a4a4a4"></div><div class="a" style="left:24px;top:244px;width:1px;height:3px;background:#a4a4a4"></div><div class="a" style="left:32px;top:244px;width:1px;height:3px;background:#a4a4a4"></div><div class="a" style="left:39px;top:244px;width:1px;height:3px;background:#a4a4a4"></div><div class="a" style="left:47px;top:244px;width:1px;height:3px;background:#a4a4a4"></div><div class="a" style="left:54px;top:244px;width:1px;height:3px;background:#a4a4a4"></div><div class="a" style="left:61px;top:244px;width:1px;height:3px;background:#a4a4a4"></div><div class="a" style="left:69px;top:244px;width:1px;height:3px;background:#a4a4a4"></div><div class="a" style="left:76px;top:244px;width:1px;height:3px;background:#a4a4a4"></div><div class="a" style="left:84px;top:244px;width:1px;height:3px;background:#a4a4a4"></div><div class="a" style="left:91px;top:244px;width:1px;height:3px;background:#a4a4a4"></div><div class="a" style="left:48px;top:242px;width:11px;height:11px;border-radius:50%;background:#5865e0"><div class="a" style="left:4px;top:4px;width:3px;height:3px;background:#aab0f0;border-radius:1px"></div></div><div class="t" style="left:8px;top:264px;font-size:10.7px;color:#222">Mono, 44100Hz</div><div class="t" style="left:8px;top:275px;font-size:10.7px;color:#222">32-bit Fließkomma</div><div class="a" style="left:5px;top:287px;width:18px;height:18px;background:#cbd8f0;border-right:1px solid #8f96a6;border-bottom:1px solid #8f96a6"></div><div class="a" style="left:23px;top:287px;width:59px;height:18px;background:#cbd8f0;border-right:1px solid #8f96a6;border-bottom:1px solid #8f96a6"></div><svg class="a" style="left:8px;top:292px" width="13" height="8"><path d="M0 7H12L6 0Z" fill="#000"/></svg><div class="t" style="left:26px;top:290px;font-size:11px;letter-spacing:0.2px">Auswählen</div><div class="a" style="left:101px;top:162px;width:30px;height:143px;background:#d6e2fa"></div><div class="t" style="left:86px;top:164px;width:40px;text-align:right;font-size:12px;font-weight:bold">1,0</div><div class="t" style="left:86px;top:194px;width:40px;text-align:right;font-size:11px;">0,5</div><div class="t" style="left:86px;top:229px;width:40px;text-align:right;font-size:12px;font-weight:bold">0,0</div><div class="t" style="left:86px;top:266px;width:40px;text-align:right;font-size:11px;">-0,5</div><div class="t" style="left:86px;top:292px;width:40px;text-align:right;font-size:12px;font-weight:bold">-1,0</div><div class="a" style="left:127px;top:198px;width:4px;height:1px;background:#000"></div><div class="a" style="left:127px;top:233px;width:4px;height:1px;background:#000"></div><div class="a" style="left:127px;top:269px;width:4px;height:1px;background:#000"></div><div class="a" style="left:132px;top:162px;width:46px;height:143px;background:#c3c3c3"></div><div class="a" style="left:178px;top:162px;width:119px;height:143px;background:#eaf0fc"></div><div class="a" style="left:297px;top:162px;width:1px;height:143px;background:#a8a8b8"></div><div class="a" style="left:298px;top:162px;width:1280px;height:143px;background:#d4d4d4"></div><svg class="a" style="left:0;top:0" width="400" height="320"><path d="M132.5 232.8V233.8M133.5 232.8V233.8M134.5 232.8V233.8M135.5 232.8V233.8M136.5 232.8V233.8M137.5 232.8V233.8M138.5 232.8V233.8M139.5 232.8V233.8M140.5 232.8V233.8M141.5 232.8V233.8M142.5 232.8V233.8M143.5 232.8V233.8M144.5 232.8V233.8M145.5 232.8V233.8M146.5 232.8V233.8M147.5 232.8V233.8M148.5 232.8V233.8M149.5 232.8V233.8M150.5 232.8V233.8M151.5 232.8V233.8M152.5 232.8V233.8M153.5 232.8V233.8M154.5 232.8V233.8M155.5 232.8V233.8M156.5 232.8V233.8M157.5 232.8V233.8M158.5 232.8V233.8M159.5 232.8V233.8M160.5 232.8V233.8M161.5 232.8V233.8M162.5 232.8V233.8M163.5 232.8V233.8M164.5 232.8V233.8M165.5 232.8V233.8M166.5 232.8V233.8M167.5 232.8V233.8M168.5 232.8V233.8M169.5 232.8V233.8M170.5 232.8V233.8M171.5 232.8V233.8M172.5 232.8V233.8M173.5 232.8V233.8M174.5 232.7V233.9M175.5 232.7V233.9M176.5 232.6V234.0M177.5 230.8V235.8M178.5 230.7V235.9M179.5 230.5V236.1M180.5 230.4V236.2M181.5 230.2V236.4M182.5 230.1V236.5M183.5 222.5V244.1M184.5 162.5V304.1M185.5 166.0V304.1M186.5 173.1V297.0M187.5 179.0V250.3M188.5 220.2V244.2M189.5 220.7V244.5M190.5 222.6V243.0M191.5 221.8V244.0M192.5 224.1V241.7M193.5 222.2V243.4M194.5 222.2V248.0M195.5 214.5V254.4M196.5 213.7V255.9M197.5 211.5V260.7M198.5 190.8V272.2M199.5 211.4V252.2M200.5 162.5V304.1M201.5 197.9V275.8M202.5 222.5V244.8M203.5 222.1V241.7M204.5 225.5V241.3M205.5 225.6V241.3M206.5 225.2V243.5M207.5 222.4V243.8M208.5 222.5V243.3M209.5 219.9V244.3M210.5 218.8V248.3M211.5 217.2V245.6M212.5 217.7V249.3M213.5 215.2V248.4M214.5 217.3V249.8M215.5 213.1V251.9M216.5 216.0V253.5M217.5 212.9V256.1M218.5 209.2V262.2M219.5 203.4V262.1M220.5 206.2V267.7M221.5 202.9V267.6M222.5 197.1V274.1M223.5 189.5V275.6M224.5 186.2V278.5M225.5 184.7V279.3M226.5 187.9V275.4M227.5 193.9V275.9M228.5 190.9V279.4M229.5 191.8V275.5M230.5 198.1V278.2M231.5 191.1V272.2M232.5 186.8V282.6M233.5 188.9V280.3M234.5 177.5V281.0M235.5 205.0V282.9M236.5 176.3V286.8M237.5 181.9V278.0M238.5 180.7V286.0M239.5 189.7V275.8M240.5 187.7V279.9M241.5 183.1V287.1M242.5 185.8V275.4M243.5 173.5V284.6M244.5 190.9V273.4M245.5 201.1V260.0M246.5 209.4V256.9M247.5 169.6V304.1M248.5 208.1V255.5M249.5 205.7V255.9M250.5 205.3V259.1M251.5 207.4V262.0M252.5 203.6V262.1M253.5 207.1V264.4M254.5 206.2V264.1M255.5 206.9V259.8M256.5 204.0V266.0M257.5 197.8V270.2M258.5 202.3V270.5M259.5 207.0V264.1M260.5 205.7V258.7M261.5 200.2V258.6M262.5 202.0V257.0M263.5 189.9V260.4M264.5 191.1V256.6M265.5 200.8V263.4M266.5 189.4V293.5M267.5 166.0V304.1M268.5 201.2V265.1M269.5 162.5V304.1M270.5 208.9V264.1M271.5 215.0V263.4M272.5 208.7V262.2M273.5 203.2V262.3M274.5 187.3V293.5M275.5 205.9V258.9M276.5 206.4V247.8M277.5 208.2V247.9M278.5 212.5V249.3M279.5 211.4V246.4M280.5 211.2V246.9M281.5 213.7V247.4M282.5 210.9V246.8M283.5 211.8V247.9M284.5 209.2V252.7M285.5 198.1V251.8M286.5 199.1V254.8M287.5 162.5V304.1M288.5 169.6V304.1M289.5 162.5V300.6M290.5 174.8V294.7M291.5 166.0V304.1M292.5 162.5V297.0M293.5 175.3V300.7M294.5 191.1V288.1M295.5 191.8V270.4M296.5 193.2V256.2" stroke="#3232c8" stroke-width="1"/><path d="M177.5 232.5V234.1M178.5 232.3V234.3M179.5 232.4V234.2M180.5 232.2V234.3M181.5 232.1V234.5M182.5 232.1V234.6M183.5 227.1V239.7M184.5 210.2V259.4M185.5 205.6V260.1M186.5 208.9V255.9M187.5 217.7V248.4M188.5 226.5V240.6M189.5 226.3V240.4M190.5 225.6V240.8M191.5 226.4V239.8M192.5 225.7V240.0M193.5 225.3V240.6M194.5 225.3V240.1M195.5 226.4V240.3M196.5 226.3V240.0M197.5 226.1V239.9M198.5 225.1V239.8M199.5 225.8V240.5M200.5 225.9V240.1M201.5 224.5V240.6M202.5 225.6V240.0M203.5 225.6V240.8M204.5 225.5V240.2M205.5 225.6V240.8M206.5 225.2V240.9M207.5 224.1V241.7M208.5 223.3V241.9M209.5 223.4V242.4M210.5 222.9V242.1M211.5 224.1V242.9M212.5 223.4V243.0M213.5 223.3V243.1M214.5 222.3V243.6M215.5 221.3V242.6M216.5 222.0V242.6M217.5 221.5V243.0M218.5 220.3V244.2M219.5 221.9V243.3M220.5 220.4V245.3M221.5 220.8V245.1M222.5 221.6V244.9M223.5 220.0V245.5M224.5 220.8V245.6M225.5 220.6V246.1M226.5 220.0V245.4M227.5 221.2V246.2M228.5 219.5V245.8M229.5 220.1V247.1M230.5 221.0V246.7M231.5 219.3V246.7M232.5 220.2V245.7M233.5 220.3V246.2M234.5 219.5V248.2M235.5 220.0V247.2M236.5 218.1V247.2M237.5 219.9V247.6M238.5 218.3V248.9M239.5 218.8V247.3M240.5 218.2V248.0M241.5 217.1V248.0M242.5 217.3V247.1M243.5 219.1V248.7M244.5 221.5V244.2M245.5 224.7V241.7M246.5 224.7V241.9M247.5 224.4V241.3M248.5 225.2V241.8M249.5 224.6V241.7M250.5 223.8V242.5M251.5 223.0V241.5M252.5 224.1V242.2M253.5 223.5V242.5M254.5 222.2V242.5M255.5 222.4V243.2M256.5 223.1V243.4M257.5 222.2V243.4M258.5 221.3V242.7M259.5 221.7V243.6M260.5 220.9V242.4M261.5 221.7V243.9M262.5 221.1V243.9M263.5 220.0V243.5M264.5 222.0V243.7M265.5 221.5V243.8M266.5 222.6V243.7M267.5 223.2V244.7M268.5 222.9V243.5M269.5 223.3V243.3M270.5 224.1V245.2M271.5 224.0V244.1M272.5 224.0V246.5M273.5 225.5V245.9M274.5 224.1V246.1M275.5 222.5V246.1M276.5 223.0V246.8M277.5 221.9V247.9M278.5 221.7V248.5M279.5 219.9V246.4M280.5 219.1V246.9M281.5 217.9V247.4M282.5 216.5V246.8M283.5 215.5V247.9M284.5 216.7V252.7M285.5 215.9V251.8M286.5 213.0V252.2M287.5 214.4V253.2M288.5 213.4V254.0M289.5 214.0V253.4M290.5 215.1V251.0M291.5 213.9V252.6M292.5 215.2V251.5M293.5 212.6V251.1M294.5 214.2V253.5M295.5 214.0V252.3M296.5 213.4V253.7" stroke="#6464dc" stroke-width="1"/></svg><div class="a" style="left:1583px;top:157px;width:17px;height:606px;background:#f0f0f0"></div><div class="a" style="left:1585px;top:172px;width:13px;height:573px;background:#cdcdcd"></div><svg class="a" style="left:1587px;top:163px" width="9" height="6"><path d="M1 5L4.5 1.5L8 5" fill="none" stroke="#606060" stroke-width="2"/></svg><svg class="a" style="left:1587px;top:751px" width="9" height="6"><path d="M1 1L4.5 4.5L8 1" fill="none" stroke="#606060" stroke-width="2"/></svg><div class="a" style="left:0px;top:763px;width:1600px;height:17px;background:#f0f0f0"></div><div class="a" style="left:152px;top:765px;width:1413px;height:13px;background:#cdcdcd"></div><svg class="a" style="left:141px;top:767px" width="7" height="9"><path d="M5.5 1L2 4.5L5.5 8" fill="none" stroke="#505050" stroke-width="2"/></svg><svg class="a" style="left:1571px;top:767px" width="7" height="9"><path d="M1.5 1L5 4.5L1.5 8" fill="none" stroke="#505050" stroke-width="2"/></svg><div class="a" style="left:0px;top:780px;width:1600px;height:56px;background:#f5f8fd;border-top:1px solid #d0d4dc"></div><div class="a" style="left:0px;top:835px;width:1600px;height:1px;background:#d0d4dc"></div><div class="grab" style="left:4px;top:785px;height:47px;width:4px"></div><div class="a" style="left:10px;top:781px;width:1px;height:54px;background:#d4d8e0"></div><div class="t" style="left:17px;top:792px;letter-spacing:-0.05px">Projekt-Rate (Hz)</div><div class="a" style="left:116px;top:789px;width:1px;height:17px;background:#b0b4bc"></div><div class="a" style="left:116px;top:814px;width:1px;height:15px;background:#b0b4bc"></div><div class="a" style="left:17px;top:810px;width:80px;height:23px;background:#fff;border:1px solid #6e6e6e"></div><div class="t" style="left:23px;top:815px">44100</div><svg class="a" style="left:83px;top:818px" width="10" height="6"><path d="M0.5 0.5L5 5L9.5 0.5" fill="none" stroke="#333" stroke-width="1.1"/></svg><div class="t" style="left:123px;top:792px;letter-spacing:-0.1px">Einrasten</div><div class="a" style="left:123px;top:810px;width:81px;height:23px;background:#e1e1e1;border:1px solid #adadad"></div><div class="t" style="left:127px;top:815px">Aus</div><svg class="a" style="left:190px;top:818px" width="10" height="6"><path d="M0.5 0.5L5 5L9.5 0.5" fill="none" stroke="#333" stroke-width="1.1"/></svg><div class="a" style="left:210px;top:789px;width:1px;height:17px;background:#b0b4bc"></div><div class="a" style="left:210px;top:814px;width:1px;height:15px;background:#b0b4bc"></div><div class="t" style="left:217px;top:792px;letter-spacing:-0.1px">Audioposition</div><div class="a" style="left:394px;top:789px;width:1px;height:17px;background:#b0b4bc"></div><div class="a" style="left:394px;top:814px;width:1px;height:15px;background:#b0b4bc"></div><div class="a" style="left:401px;top:786px;width:346px;height:22px;background:#e1e1e1;border:1px solid #adadad"></div><div class="t" style="left:405px;top:791px;letter-spacing:-0.2px">Start und Ende der Auswahl</div><svg class="a" style="left:732px;top:794px" width="10" height="6"><path d="M0.5 0.5L5 5L9.5 0.5" fill="none" stroke="#333" stroke-width="1.1"/></svg><div class="a" style="left:217px;top:810px;width:170px;height:21px;background:#c4c4cc;border-top:2px solid #7a7a7a;border-left:2px solid #7a7a7a;border-right:1px solid #e8e8e8;border-bottom:1px solid #e8e8e8"></div><div class="a" style="left:219px;top:812px;width:21px;height:18px;background:#d6d6da"></div><div class="a" style="left:240px;top:812px;width:13px;height:18px;background:#bdbdc4"></div><div class="a" style="left:253px;top:812px;width:20px;height:18px;background:#d6d6da"></div><div class="a" style="left:273px;top:812px;width:27px;height:18px;background:#bdbdc4"></div><div class="a" style="left:300px;top:812px;width:20px;height:18px;background:#d6d6da"></div><div class="a" style="left:320px;top:812px;width:33px;height:18px;background:#d6d6da"></div><div class="a" style="left:353px;top:812px;width:24px;height:18px;background:#bdbdc4"></div><div class="a" style="left:377px;top:812px;width:9px;height:18px;background:#bdbdc4"></div><div class="a" style="left:377px;top:812px;width:1px;height:18px;background:#f0f0f0"></div><div class="t" style="left:220.9px;top:815px;font-size:13px;color:#1c1ca8">0</div><div class="t" style="left:231.0px;top:815px;font-size:13px;color:#1c1ca8">0</div><div class="t" style="left:254.1px;top:815px;font-size:13px;color:#1c1ca8">0</div><div class="t" style="left:263.6px;top:815px;font-size:13px;color:#1c1ca8">0</div><div class="t" style="left:300.8px;top:815px;font-size:13px;color:#1c1ca8">0</div><div class="t" style="left:310.9px;top:815px;font-size:13px;color:#1c1ca8">0</div><div class="t" style="left:323.8px;top:815px;font-size:13px;color:#1c1ca8">5</div><div class="t" style="left:333.9px;top:815px;font-size:13px;color:#1c1ca8">3</div><div class="t" style="left:343.5px;top:815px;font-size:13px;color:#1c1ca8">4</div><div class="t" style="left:243px;top:815px;font-size:13px;color:#1c1ca8">h</div><div class="t" style="left:276px;top:815px;font-size:13px;color:#1c1ca8;letter-spacing:-0.3px">min</div><div class="t" style="left:319.5px;top:815px;font-size:13px;color:#1c1ca8">.</div><div class="t" style="left:356px;top:815px;font-size:13px;color:#1c1ca8;letter-spacing:-0.2px">sec</div><svg class="a" style="left:378px;top:818px" width="8" height="5"><path d="M0 0H8L4 5Z" fill="#000"/></svg><div class="a" style="left:401px;top:810px;width:170px;height:21px;background:#c4c4cc;border-top:2px solid #7a7a7a;border-left:2px solid #7a7a7a;border-right:1px solid #e8e8e8;border-bottom:1px solid #e8e8e8"></div><div class="a" style="left:403px;top:812px;width:21px;height:18px;background:#d6d6da"></div><div class="a" style="left:424px;top:812px;width:13px;height:18px;background:#bdbdc4"></div><div class="a" style="left:437px;top:812px;width:20px;height:18px;background:#d6d6da"></div><div class="a" style="left:457px;top:812px;width:27px;height:18px;background:#bdbdc4"></div><div class="a" style="left:484px;top:812px;width:20px;height:18px;background:#d6d6da"></div><div class="a" style="left:504px;top:812px;width:33px;height:18px;background:#d6d6da"></div><div class="a" style="left:537px;top:812px;width:24px;height:18px;background:#bdbdc4"></div><div class="a" style="left:561px;top:812px;width:9px;height:18px;background:#bdbdc4"></div><div class="a" style="left:561px;top:812px;width:1px;height:18px;background:#f0f0f0"></div><div class="t" style="left:404.9px;top:815px;font-size:13px;color:#1c1ca8">0</div><div class="t" style="left:415.0px;top:815px;font-size:13px;color:#1c1ca8">0</div><div class="t" style="left:438.1px;top:815px;font-size:13px;color:#1c1ca8">0</div><div class="t" style="left:447.6px;top:815px;font-size:13px;color:#1c1ca8">0</div><div class="t" style="left:484.8px;top:815px;font-size:13px;color:#1c1ca8">0</div><div class="t" style="left:494.9px;top:815px;font-size:13px;color:#1c1ca8">0</div><div class="t" style="left:507.8px;top:815px;font-size:13px;color:#1c1ca8">5</div><div class="t" style="left:517.9px;top:815px;font-size:13px;color:#1c1ca8">3</div><div class="t" style="left:527.5px;top:815px;font-size:13px;color:#1c1ca8">4</div><div class="t" style="left:427px;top:815px;font-size:13px;color:#1c1ca8">h</div><div class="t" style="left:460px;top:815px;font-size:13px;color:#1c1ca8;letter-spacing:-0.3px">min</div><div class="t" style="left:503.5px;top:815px;font-size:13px;color:#1c1ca8">.</div><div class="t" style="left:540px;top:815px;font-size:13px;color:#1c1ca8;letter-spacing:-0.2px">sec</div><svg class="a" style="left:562px;top:818px" width="8" height="5"><path d="M0 0H8L4 5Z" fill="#000"/></svg><div class="a" style="left:577px;top:810px;width:170px;height:21px;background:#c4c4cc;border-top:2px solid #7a7a7a;border-left:2px solid #7a7a7a;border-right:1px solid #e8e8e8;border-bottom:1px solid #e8e8e8"></div><div class="a" style="left:579px;top:812px;width:21px;height:18px;background:#d6d6da"></div><div class="a" style="left:600px;top:812px;width:13px;height:18px;background:#bdbdc4"></div><div class="a" style="left:613px;top:812px;width:20px;height:18px;background:#d6d6da"></div><div class="a" style="left:633px;top:812px;width:27px;height:18px;background:#bdbdc4"></div><div class="a" style="left:660px;top:812px;width:20px;height:18px;background:#d6d6da"></div><div class="a" style="left:680px;top:812px;width:33px;height:18px;background:#d6d6da"></div><div class="a" style="left:713px;top:812px;width:24px;height:18px;background:#bdbdc4"></div><div class="a" style="left:737px;top:812px;width:9px;height:18px;background:#bdbdc4"></div><div class="a" style="left:737px;top:812px;width:1px;height:18px;background:#f0f0f0"></div><div class="t" style="left:580.9px;top:815px;font-size:13px;color:#1c1ca8">0</div><div class="t" style="left:591.0px;top:815px;font-size:13px;color:#1c1ca8">0</div><div class="t" style="left:614.1px;top:815px;font-size:13px;color:#1c1ca8">0</div><div class="t" style="left:623.6px;top:815px;font-size:13px;color:#1c1ca8">0</div><div class="t" style="left:660.8px;top:815px;font-size:13px;color:#1c1ca8">0</div><div class="t" style="left:670.9px;top:815px;font-size:13px;color:#1c1ca8">1</div><div class="t" style="left:683.8px;top:815px;font-size:13px;color:#1c1ca8">9</div><div class="t" style="left:693.9px;top:815px;font-size:13px;color:#1c1ca8">5</div><div class="t" style="left:703.5px;top:815px;font-size:13px;color:#1c1ca8">0</div><div class="t" style="left:603px;top:815px;font-size:13px;color:#1c1ca8">h</div><div class="t" style="left:636px;top:815px;font-size:13px;color:#1c1ca8;letter-spacing:-0.3px">min</div><div class="t" style="left:679.5px;top:815px;font-size:13px;color:#1c1ca8">.</div><div class="t" style="left:716px;top:815px;font-size:13px;color:#1c1ca8;letter-spacing:-0.2px">sec</div><svg class="a" style="left:738px;top:818px" width="8" height="5"><path d="M0 0H8L4 5Z" fill="#000"/></svg><div class="a" style="left:0px;top:836px;width:1600px;height:24px;background:#f0f0f0"></div><div class="a" style="left:9px;top:838px;width:1px;height:22px;background:#d8d8d8"></div><div class="a" style="left:160px;top:838px;width:1px;height:22px;background:#d8d8d8"></div><div class="a" style="left:1521px;top:838px;width:1px;height:22px;background:#d8d8d8"></div><div class="t" style="left:14px;top:845px">Gestoppt.</div><div class="a" style="left:525px;top:147px;width:550px;height:559px;background:#f0f0f0;border:1px solid #2e2e38;box-shadow:inset 1px 1px 0 #fff,inset -1px -1px 0 #fff,2px 3px 10px rgba(0,0,0,0.3)"></div><div class="a" style="left:526px;top:148px;width:548px;height:30px;background:#fff"></div><div class="t" style="left:534px;top:157px;letter-spacing:-0.35px">Frequenzanalyse</div><div class="a" style="left:955px;top:162px;width:10px;height:1px;background:#c8c8c8"></div><div class="a" style="left:1000px;top:157px;width:10px;height:10px;border:1px solid #000"></div><svg class="a" style="left:1045px;top:156px" width="12" height="12"><path d="M0.5 0.5L11.5 11.5M11.5 0.5L0.5 11.5" stroke="#000" stroke-width="1.1"/></svg><div class="a" style="left:569px;top:183px;width:452px;height:330px;background:#000"></div><div class="a" style="left:570px;top:184px;width:450px;height:328px;background:#fff"></div><svg class="a" style="left:569px;top:183px" width="452" height="330">
<defs><clipPath id="cp"><polygon points="0.8,221.0 12.0,202.3 25.3,175.7 36.0,154.3 46.7,135.7 54.7,119.7 65.3,103.7 76.0,94.3 86.7,87.7 102.7,82.3 113.3,77.0 129.3,74.3 140.0,73.0 148.0,75.7 158.7,82.3 171.0,88.2 171.8,88.7 172.6,88.9 173.4,89.0 174.2,88.7 175.0,88.9 175.8,87.5 176.6,88.1 177.4,88.8 178.2,88.3 179.0,88.6 179.8,87.4 180.6,87.8 181.4,87.5 182.2,87.8 183.0,87.7 183.8,86.4 184.6,86.2 185.4,85.8 186.2,86.2 187.0,85.0 187.8,83.2 188.6,83.3 189.4,81.4 190.2,81.2 191.0,79.6 191.8,78.5 192.6,79.8 193.4,79.0 194.2,79.3 195.0,80.6 195.8,80.7 196.6,80.1 197.4,81.3 198.2,80.9 199.0,81.3 199.8,80.9 200.6,82.2 201.4,82.1 202.2,82.6 203.0,82.6 203.8,81.9 204.6,82.1 205.4,81.9 206.2,82.0 207.0,82.0 207.8,82.5 208.6,83.1 209.4,82.4 210.2,83.8 211.0,83.7 211.8,84.0 212.6,85.2 213.4,85.1 214.2,85.2 215.0,85.9 215.8,86.6 216.6,86.0 217.4,87.8 218.2,86.5 219.0,87.6 219.8,87.9 220.6,86.8 221.4,88.0 222.2,87.5 223.0,87.9 223.8,87.2 224.6,87.3 225.4,87.6 226.2,88.9 227.0,87.9 227.8,88.8 228.6,89.3 229.4,89.6 230.2,88.9 231.0,89.2 231.8,89.7 232.6,90.4 233.4,89.6 234.2,90.8 235.0,91.2 235.8,91.5 236.6,89.9 237.4,90.6 238.2,89.5 239.0,90.4 239.8,91.3 240.6,92.3 241.4,92.0 242.2,92.2 243.0,90.3 243.8,88.7 244.6,87.3 245.4,85.8 246.2,84.9 247.0,84.7 247.8,85.2 248.6,85.3 249.4,83.7 250.2,83.2 251.0,84.3 251.8,83.3 252.6,82.7 253.4,81.9 254.2,82.0 255.0,81.8 255.8,80.7 256.6,80.4 257.4,80.1 258.2,81.7 259.0,80.6 259.8,81.6 260.6,81.4 261.4,78.3 262.2,77.7 263.0,76.0 263.8,73.0 264.6,71.3 265.4,67.4 266.2,66.6 267.0,64.7 267.8,65.2 268.6,62.7 269.4,61.8 270.2,62.0 271.0,60.4 271.8,58.6 272.6,55.2 273.4,53.2 274.2,51.6 275.0,48.9 275.8,43.3 276.6,38.4 277.4,32.6 278.2,31.2 279.0,32.8 279.8,32.7 280.6,31.9 281.4,31.5 282.2,31.1 283.0,30.5 283.8,26.7 284.6,26.2 285.4,25.3 286.2,23.0 287.0,23.0 287.8,23.7 288.6,24.3 289.4,24.5 290.2,24.5 291.0,23.2 291.8,22.1 292.6,19.1 293.4,17.6 294.2,14.4 295.0,9.1 295.8,3.0 296.6,9.2 297.4,12.9 298.2,17.5 299.0,21.0 299.8,27.3 300.6,30.9 301.4,35.4 302.2,38.4 303.0,42.7 303.8,45.8 304.6,48.1 305.4,46.3 306.2,47.3 307.0,50.3 307.8,53.3 308.6,55.1 309.4,59.5 310.2,62.8 311.0,65.5 311.8,71.9 312.6,73.4 313.4,70.3 314.2,70.3 315.0,71.0 315.8,76.9 316.6,79.2 317.4,77.4 318.2,79.0 319.0,79.7 319.8,80.3 320.6,78.5 321.4,83.1 322.2,83.7 323.0,85.7 323.8,86.1 324.6,88.7 325.4,91.0 326.2,91.9 327.0,93.9 327.8,87.5 328.6,85.3 329.4,85.4 330.2,87.0 331.0,85.3 331.8,88.1 332.6,89.2 333.4,89.1 334.2,93.3 335.0,91.9 335.8,90.9 336.6,91.2 337.4,91.9 338.2,89.8 339.0,87.7 339.8,84.7 340.6,86.5 341.4,86.4 342.2,87.8 343.0,88.0 343.8,85.7 344.6,88.4 345.4,83.4 346.2,84.9 347.0,83.9 347.8,84.1 348.6,82.2 349.4,85.3 350.2,84.4 351.0,85.2 351.8,88.9 352.6,87.1 353.4,90.1 354.2,90.2 355.0,92.7 355.8,95.9 356.6,96.5 357.4,96.5 358.2,100.5 359.0,101.6 359.8,101.0 360.6,98.4 361.4,99.2 362.2,98.6 363.0,100.4 363.8,99.8 364.6,94.9 365.4,90.5 366.2,90.0 367.0,86.8 367.8,93.1 368.6,101.0 369.4,97.7 370.2,91.7 371.0,92.7 371.8,98.9 372.6,101.3 373.4,106.8 374.2,111.4 375.0,117.4 375.1,116.7 376.5,167.0 377.2,281.0 378.6,281.0 379.2,173.0 380.2,164.8 382.2,198.8 384.4,224.3 385.6,247.0 386.7,292.3 389.2,300.8 402.0,309.3 419.0,320.6 436.0,326.3 439.0,328.0 449.0,328.0 449.0,263.0 450.5,263.0 450.5,328.5 0.8,328.5"/></clipPath></defs>
<path d="M295.5 1V329M12.5 1V329M25.5 1V329M36.5 1V329M46.5 1V329M54.5 1V329M112.5 1V329M141.5 1V329M161.5 1V329M177.5 1V329M191.5 1V329M202.5 1V329M211.5 1V329M220.5 1V329M277.5 1V329M306.5 1V329M327.5 1V329M343.5 1V329M356.5 1V329M367.5 1V329M377.5 1V329M385.5 1V329M443.5 1V329M1 30.5H451M1 48.5H451M1 65.5H451M1 100.5H451M1 118.5H451M1 135.5H451M1 170.5H451M1 188.5H451M1 205.5H451M1 240.5H451M1 258.5H451M1 275.5H451M1 310.5H451" stroke="#a8a8a8" stroke-width="1"/>
<path d="M62.5 1V329M227.5 1V329M1 13.5H451M1 83.5H451M1 153.5H451M1 223.5H451M1 293.5H451" stroke="#787878" stroke-width="1"/>
<polygon points="0.8,221.0 12.0,202.3 25.3,175.7 36.0,154.3 46.7,135.7 54.7,119.7 65.3,103.7 76.0,94.3 86.7,87.7 102.7,82.3 113.3,77.0 129.3,74.3 140.0,73.0 148.0,75.7 158.7,82.3 171.0,88.2 171.8,88.7 172.6,88.9 173.4,89.0 174.2,88.7 175.0,88.9 175.8,87.5 176.6,88.1 177.4,88.8 178.2,88.3 179.0,88.6 179.8,87.4 180.6,87.8 181.4,87.5 182.2,87.8 183.0,87.7 183.8,86.4 184.6,86.2 185.4,85.8 186.2,86.2 187.0,85.0 187.8,83.2 188.6,83.3 189.4,81.4 190.2,81.2 191.0,79.6 191.8,78.5 192.6,79.8 193.4,79.0 194.2,79.3 195.0,80.6 195.8,80.7 196.6,80.1 197.4,81.3 198.2,80.9 199.0,81.3 199.8,80.9 200.6,82.2 201.4,82.1 202.2,82.6 203.0,82.6 203.8,81.9 204.6,82.1 205.4,81.9 206.2,82.0 207.0,82.0 207.8,82.5 208.6,83.1 209.4,82.4 210.2,83.8 211.0,83.7 211.8,84.0 212.6,85.2 213.4,85.1 214.2,85.2 215.0,85.9 215.8,86.6 216.6,86.0 217.4,87.8 218.2,86.5 219.0,87.6 219.8,87.9 220.6,86.8 221.4,88.0 222.2,87.5 223.0,87.9 223.8,87.2 224.6,87.3 225.4,87.6 226.2,88.9 227.0,87.9 227.8,88.8 228.6,89.3 229.4,89.6 230.2,88.9 231.0,89.2 231.8,89.7 232.6,90.4 233.4,89.6 234.2,90.8 235.0,91.2 235.8,91.5 236.6,89.9 237.4,90.6 238.2,89.5 239.0,90.4 239.8,91.3 240.6,92.3 241.4,92.0 242.2,92.2 243.0,90.3 243.8,88.7 244.6,87.3 245.4,85.8 246.2,84.9 247.0,84.7 247.8,85.2 248.6,85.3 249.4,83.7 250.2,83.2 251.0,84.3 251.8,83.3 252.6,82.7 253.4,81.9 254.2,82.0 255.0,81.8 255.8,80.7 256.6,80.4 257.4,80.1 258.2,81.7 259.0,80.6 259.8,81.6 260.6,81.4 261.4,78.3 262.2,77.7 263.0,76.0 263.8,73.0 264.6,71.3 265.4,67.4 266.2,66.6 267.0,64.7 267.8,65.2 268.6,62.7 269.4,61.8 270.2,62.0 271.0,60.4 271.8,58.6 272.6,55.2 273.4,53.2 274.2,51.6 275.0,48.9 275.8,43.3 276.6,38.4 277.4,32.6 278.2,31.2 279.0,32.8 279.8,32.7 280.6,31.9 281.4,31.5 282.2,31.1 283.0,30.5 283.8,26.7 284.6,26.2 285.4,25.3 286.2,23.0 287.0,23.0 287.8,23.7 288.6,24.3 289.4,24.5 290.2,24.5 291.0,23.2 291.8,22.1 292.6,19.1 293.4,17.6 294.2,14.4 295.0,9.1 295.8,3.0 296.6,9.2 297.4,12.9 298.2,17.5 299.0,21.0 299.8,27.3 300.6,30.9 301.4,35.4 302.2,38.4 303.0,42.7 303.8,45.8 304.6,48.1 305.4,46.3 306.2,47.3 307.0,50.3 307.8,53.3 308.6,55.1 309.4,59.5 310.2,62.8 311.0,65.5 311.8,71.9 312.6,73.4 313.4,70.3 314.2,70.3 315.0,71.0 315.8,76.9 316.6,79.2 317.4,77.4 318.2,79.0 319.0,79.7 319.8,80.3 320.6,78.5 321.4,83.1 322.2,83.7 323.0,85.7 323.8,86.1 324.6,88.7 325.4,91.0 326.2,91.9 327.0,93.9 327.8,87.5 328.6,85.3 329.4,85.4 330.2,87.0 331.0,85.3 331.8,88.1 332.6,89.2 333.4,89.1 334.2,93.3 335.0,91.9 335.8,90.9 336.6,91.2 337.4,91.9 338.2,89.8 339.0,87.7 339.8,84.7 340.6,86.5 341.4,86.4 342.2,87.8 343.0,88.0 343.8,85.7 344.6,88.4 345.4,83.4 346.2,84.9 347.0,83.9 347.8,84.1 348.6,82.2 349.4,85.3 350.2,84.4 351.0,85.2 351.8,88.9 352.6,87.1 353.4,90.1 354.2,90.2 355.0,92.7 355.8,95.9 356.6,96.5 357.4,96.5 358.2,100.5 359.0,101.6 359.8,101.0 360.6,98.4 361.4,99.2 362.2,98.6 363.0,100.4 363.8,99.8 364.6,94.9 365.4,90.5 366.2,90.0 367.0,86.8 367.8,93.1 368.6,101.0 369.4,97.7 370.2,91.7 371.0,92.7 371.8,98.9 372.6,101.3 373.4,106.8 374.2,111.4 375.0,117.4 375.1,116.7 376.5,167.0 377.2,281.0 378.6,281.0 379.2,173.0 380.2,164.8 382.2,198.8 384.4,224.3 385.6,247.0 386.7,292.3 389.2,300.8 402.0,309.3 419.0,320.6 436.0,326.3 439.0,328.0 449.0,328.0 449.0,263.0 450.5,263.0 450.5,328.5 0.8,328.5" fill="#8a3bc0"/>
<g clip-path="url(#cp)"><path d="M295.5 1V329M12.5 1V329M25.5 1V329M36.5 1V329M46.5 1V329M54.5 1V329M112.5 1V329M141.5 1V329M161.5 1V329M177.5 1V329M191.5 1V329M202.5 1V329M211.5 1V329M220.5 1V329M277.5 1V329M306.5 1V329M327.5 1V329M343.5 1V329M356.5 1V329M367.5 1V329M377.5 1V329M385.5 1V329M443.5 1V329M1 30.5H451M1 48.5H451M1 65.5H451M1 100.5H451M1 118.5H451M1 135.5H451M1 170.5H451M1 188.5H451M1 205.5H451M1 240.5H451M1 258.5H451M1 275.5H451M1 310.5H451" stroke="#cc9ce8" stroke-width="1"/><path d="M62.5 1V329M227.5 1V329M1 13.5H451M1 83.5H451M1 153.5H451M1 223.5H451M1 293.5H451" stroke="#b48ad8" stroke-width="1"/></g>
<rect x="0.5" y="0.5" width="450.5" height="328.5" fill="none" stroke="#000" stroke-width="1.2"/>
</svg><div class="t" style="left:500px;top:186px;width:64px;text-align:right;font-weight:bold">-22dB</div><div class="t" style="left:500px;top:208px;width:64px;text-align:right;">-27dB</div><div class="t" style="left:500px;top:225px;width:64px;text-align:right;">-30dB</div><div class="t" style="left:500px;top:243px;width:64px;text-align:right;">-33dB</div><div class="t" style="left:500px;top:260px;width:64px;text-align:right;font-weight:bold">-36dB</div><div class="t" style="left:500px;top:278px;width:64px;text-align:right;">-39dB</div><div class="t" style="left:500px;top:295px;width:64px;text-align:right;">-42dB</div><div class="t" style="left:500px;top:313px;width:64px;text-align:right;">-45dB</div><div class="t" style="left:500px;top:330px;width:64px;text-align:right;font-weight:bold">-48dB</div><div class="t" style="left:500px;top:348px;width:64px;text-align:right;">-51dB</div><div class="t" style="left:500px;top:365px;width:64px;text-align:right;">-54dB</div><div class="t" style="left:500px;top:383px;width:64px;text-align:right;">-57dB</div><div class="t" style="left:500px;top:400px;width:64px;text-align:right;font-weight:bold">-60dB</div><div class="t" style="left:500px;top:418px;width:64px;text-align:right;">-63dB</div><div class="t" style="left:500px;top:435px;width:64px;text-align:right;">-66dB</div><div class="t" style="left:500px;top:453px;width:64px;text-align:right;">-69dB</div><div class="t" style="left:500px;top:470px;width:64px;text-align:right;font-weight:bold">-72dB</div><div class="t" style="left:500px;top:498px;width:64px;text-align:right;font-weight:bold">-78dB</div><div class="a" style="left:565px;top:196px;width:4px;height:1px;background:#000"></div><div class="a" style="left:565px;top:213px;width:4px;height:1px;background:#000"></div><div class="a" style="left:565px;top:231px;width:4px;height:1px;background:#000"></div><div class="a" style="left:565px;top:248px;width:4px;height:1px;background:#000"></div><div class="a" style="left:565px;top:266px;width:4px;height:1px;background:#000"></div><div class="a" style="left:565px;top:283px;width:4px;height:1px;background:#000"></div><div class="a" style="left:565px;top:301px;width:4px;height:1px;background:#000"></div><div class="a" style="left:565px;top:318px;width:4px;height:1px;background:#000"></div><div class="a" style="left:565px;top:336px;width:4px;height:1px;background:#000"></div><div class="a" style="left:565px;top:353px;width:4px;height:1px;background:#000"></div><div class="a" style="left:565px;top:371px;width:4px;height:1px;background:#000"></div><div class="a" style="left:565px;top:388px;width:4px;height:1px;background:#000"></div><div class="a" style="left:565px;top:406px;width:4px;height:1px;background:#000"></div><div class="a" style="left:565px;top:423px;width:4px;height:1px;background:#000"></div><div class="a" style="left:565px;top:441px;width:4px;height:1px;background:#000"></div><div class="a" style="left:565px;top:458px;width:4px;height:1px;background:#000"></div><div class="a" style="left:565px;top:476px;width:4px;height:1px;background:#000"></div><div class="a" style="left:565px;top:493px;width:4px;height:1px;background:#000"></div><div class="a" style="left:565px;top:511px;width:4px;height:1px;background:#000"></div><div class="a" style="left:565px;top:196px;width:4px;height:1px;background:#000"></div><div class="a" style="left:581px;top:512px;width:1px;height:4px;background:#000"></div><div class="a" style="left:594px;top:512px;width:1px;height:4px;background:#000"></div><div class="a" style="left:605px;top:512px;width:1px;height:4px;background:#000"></div><div class="a" style="left:615px;top:512px;width:1px;height:4px;background:#000"></div><div class="a" style="left:623px;top:512px;width:1px;height:4px;background:#000"></div><div class="a" style="left:631px;top:512px;width:1px;height:6px;background:#000"></div><div class="a" style="left:681px;top:512px;width:1px;height:4px;background:#000"></div><div class="a" style="left:710px;top:512px;width:1px;height:4px;background:#000"></div><div class="a" style="left:730px;top:512px;width:1px;height:4px;background:#000"></div><div class="a" style="left:746px;top:512px;width:1px;height:4px;background:#000"></div><div class="a" style="left:760px;top:512px;width:1px;height:4px;background:#000"></div><div class="a" style="left:771px;top:512px;width:1px;height:4px;background:#000"></div><div class="a" style="left:780px;top:512px;width:1px;height:4px;background:#000"></div><div class="a" style="left:789px;top:512px;width:1px;height:4px;background:#000"></div><div class="a" style="left:796px;top:512px;width:1px;height:6px;background:#000"></div><div class="a" style="left:846px;top:512px;width:1px;height:4px;background:#000"></div><div class="a" style="left:875px;top:512px;width:1px;height:4px;background:#000"></div><div class="a" style="left:896px;top:512px;width:1px;height:4px;background:#000"></div><div class="a" style="left:912px;top:512px;width:1px;height:4px;background:#000"></div><div class="a" style="left:925px;top:512px;width:1px;height:4px;background:#000"></div><div class="a" style="left:936px;top:512px;width:1px;height:4px;background:#000"></div><div class="a" style="left:946px;top:512px;width:1px;height:4px;background:#000"></div><div class="a" style="left:954px;top:512px;width:1px;height:4px;background:#000"></div><div class="a" style="left:1012px;top:512px;width:1px;height:4px;background:#000"></div><div class="t" style="left:591px;top:519px;width:80px;text-align:center;font-weight:bold">100,00Hz</div><div class="t" style="left:670px;top:519px;width:80px;text-align:center;">300,00Hz</div><div class="t" style="left:757px;top:519px;width:80px;text-align:center;font-weight:bold">1000,00Hz</div><div class="t" style="left:836px;top:519px;width:80px;text-align:center;">3000,00Hz</div><div class="t" style="left:906px;top:519px;width:80px;text-align:center;">8000,00Hz</div><div class="a" style="left:1022px;top:184px;width:15px;height:328px;background:#f0f0f0"></div><div class="a" style="left:1023px;top:199px;width:13px;height:298px;background:#cdcdcd"></div><svg class="a" style="left:1025px;top:189px" width="9" height="6"><path d="M0.5 5L4.5 1L8.5 5" fill="none" stroke="#606060" stroke-width="1.5"/></svg><svg class="a" style="left:1025px;top:501px" width="9" height="6"><path d="M0.5 1L4.5 5L8.5 1" fill="none" stroke="#606060" stroke-width="1.5"/></svg><svg class="a" style="left:1048px;top:182px" width="17" height="17"><path d="M1.5 15.5L7 10" stroke="#000" stroke-width="3"/><circle cx="11" cy="6" r="5" fill="#fff" stroke="#000" stroke-width="1.3"/><path d="M8 6H14M11 3V9" stroke="#1a1a9a" stroke-width="2"/></svg><svg class="a" style="left:1048px;top:496px" width="17" height="17"><path d="M1.5 15.5L7 10" stroke="#000" stroke-width="3"/><circle cx="11" cy="6" r="5" fill="#fff" stroke="#000" stroke-width="1.3"/><path d="M8 6H14" stroke="#1a1a9a" stroke-width="2"/></svg><div class="a" style="left:1053px;top:212px;width:5px;height:278px;background:#e2e2e2;border:1px solid #d0d0d0"></div><svg class="a" style="left:1046px;top:472px" width="20" height="13"><path d="M0 1.5Q0 0 1.5 0H13L19 6.5L13 13H1.5Q0 13 0 11.5Z" fill="#0078d7"/></svg><div class="t" style="left:569px;top:548px;letter-spacing:-0.4px">Cursor:</div><div class="a" style="left:607px;top:543px;width:147px;height:23px;border:1px solid #7a7a7a;background:#f0f0f0"></div><div class="t" style="left:613px;top:548px;letter-spacing:-0.5px">2756 Hz (F7) = &nbsp;-27 dB</div><div class="a" style="left:746px;top:538px;width:195px;height:33px;border:4px solid #e8141a"></div><div class="t" style="left:754px;top:548px;letter-spacing:-0.6px">Spitze:</div><div class="a" style="left:788px;top:543px;width:148px;height:23px;border:1px solid #7a7a7a;background:#f0f0f0"></div><div class="t" style="left:794px;top:548px;letter-spacing:-0.5px">2571 Hz (E7) = &nbsp;-22,3 dB</div><div class="a" style="left:941px;top:548px;width:13px;height:13px;border:1px solid #333;background:#fff"></div><svg class="a" style="left:942px;top:549px" width="11" height="11"><path d="M1.5 5.5L4.2 8.5L9.5 1.5" fill="none" stroke="#222" stroke-width="1.3"/></svg><div class="t" style="left:957px;top:549px;letter-spacing:-0.05px">Gitterlinien</div><div class="t" style="left:533px;top:580px;letter-spacing:-0.1px">Algorithmus:</div><div class="a" style="left:606px;top:573px;width:180px;height:26px;background:#e1e1e1;border:1px solid #adadad"></div><svg class="a" style="left:773px;top:584px" width="10" height="6"><path d="M0.5 0.5L5 5L9.5 0.5" fill="none" stroke="#333" stroke-width="1.1"/></svg><div class="t" style="left:610px;top:580px;letter-spacing:-0.3px">Spektrum</div><div class="t" style="left:795px;top:580px;letter-spacing:-0.3px">Größe:</div><div class="a" style="left:834px;top:573px;width:119px;height:26px;background:#e1e1e1;border:1px solid #adadad"></div><svg class="a" style="left:940px;top:584px" width="10" height="6"><path d="M0.5 0.5L5 5L9.5 0.5" fill="none" stroke="#333" stroke-width="1.1"/></svg><div class="t" style="left:838px;top:580px;letter-spacing:-0.3px">1024</div><div class="a" style="left:971px;top:574px;width:86px;height:24px;background:#e1e1e1;border:1px solid #adadad;text-align:center;line-height:22px;letter-spacing:-0.3px">Export ...</div><div class="t" style="left:533px;top:610px;letter-spacing:-0.1px">Funktion:</div><div class="a" style="left:606px;top:603px;width:180px;height:26px;background:#e1e1e1;border:1px solid #adadad"></div><svg class="a" style="left:773px;top:614px" width="10" height="6"><path d="M0.5 0.5L5 5L9.5 0.5" fill="none" stroke="#333" stroke-width="1.1"/></svg><div class="t" style="left:610px;top:610px;letter-spacing:-0.3px">Hann window</div><div class="t" style="left:795px;top:610px;letter-spacing:-0.3px">Achse:</div><div class="a" style="left:834px;top:603px;width:119px;height:26px;background:#e1e1e1;border:1px solid #adadad"></div><svg class="a" style="left:940px;top:614px" width="10" height="6"><path d="M0.5 0.5L5 5L9.5 0.5" fill="none" stroke="#333" stroke-width="1.1"/></svg><div class="t" style="left:838px;top:610px;letter-spacing:-0.3px">Log. Darstellung</div><div class="a" style="left:963px;top:604px;width:103px;height:24px;background:#e1e1e1;border:1px solid #adadad;text-align:center;line-height:22px;letter-spacing:-0.3px">Neu zeichnen ...</div><div class="a" style="left:939px;top:640px;width:86px;height:24px;background:#e1e1e1;border:1px solid #adadad;text-align:center;line-height:22px;letter-spacing:-0.3px">Schließen</div><div class="a" style="left:1035px;top:639px;width:27px;height:27px;background:#e1e1e1;border:1px solid #adadad"></div><div class="a" style="left:1038px;top:642px;width:21px;height:21px;border-radius:50%;background:#5b97ef;color:#fff;font-size:18px;line-height:22px;text-align:center">?</div><div class="a" style="left:527px;top:682px;width:547px;height:1px;background:#dadada"></div><svg class="a" style="left:1063px;top:693px" width="10" height="10"><g fill="#b8b8b8"><rect x="7" y="1" width="2" height="2"/><rect x="4" y="4" width="2" height="2"/><rect x="7" y="4" width="2" height="2"/><rect x="1" y="7" width="2" height="2"/><rect x="4" y="7" width="2" height="2"/><rect x="7" y="7" width="2" height="2"/></g></svg><div class="a" style="left:0px;top:860px;width:1600px;height:40px;background:#242a1e"></div><svg class="a" style="left:16px;top:872px" width="17" height="17"><g fill="#fff"><path d="M0 2.2L6.6 1.3V7.7H0Z"/><path d="M7.5 1.2L16.2 0V7.7H7.5Z"/><path d="M0 8.5H6.6V14.9L0 14Z"/><path d="M7.5 8.5H16.2V16.2L7.5 15Z"/></g></svg><div class="a" style="left:48px;top:860px;width:288px;height:40px;background:#f0f0f0"></div><svg class="a" style="left:59px;top:871px" width="18" height="18"><circle cx="11.5" cy="6.5" r="5" fill="none" stroke="#222" stroke-width="1.2"/><path d="M8 10L1.2 16.8" stroke="#222" stroke-width="1.3"/></svg><div class="t" style="left:88px;top:873px;font-size:14px;color:#222;letter-spacing:-0.1px">Suchen</div><svg class="a" style="left:262px;top:861px" width="74" height="39">
<path d="M2 14.6L9.3 2.3L16.6 14.6Z" fill="#d65a3e"/><rect x="2.6" y="14" width="13.4" height="25" fill="#f0dab0"/><circle cx="9" cy="20.5" r="2.5" fill="#e0a080" stroke="#a86a58" stroke-width="0.8"/><rect x="8" y="15.5" width="2" height="2" fill="#6a5040"/><rect x="8" y="26.5" width="2" height="2" fill="#6a5040"/><rect x="4" y="32" width="10" height="7" fill="#7a6058"/><rect x="7" y="33" width="4" height="6" fill="#f0e0d0"/>
<rect x="15.5" y="25" width="4.5" height="14" fill="#d8907a"/>
<path d="M19 22L28.4 7.1L43.6 22.5V39H19Z" fill="#e6bc66"/><path d="M28.4 7.1L44.5 21L42 23.5L30 11Z" fill="#8a6232"/><rect x="21" y="23" width="13" height="3.5" fill="#78b0b0"/><rect x="21" y="29.5" width="14" height="3.5" fill="#78b0b0"/><rect x="25" y="14.5" width="6" height="3" fill="#78b0b0"/><rect x="19" y="34.5" width="24.6" height="4.5" fill="#c88078"/><rect x="26" y="35" width="2" height="4" fill="#3a9a90"/>
<rect x="43.6" y="25" width="3" height="14" fill="#9a8ab0"/>
<path d="M46 14.4L51.5 5.4L57 14.4Z" fill="#d65a3e"/><rect x="46.3" y="14" width="9.7" height="25" fill="#f0dab0"/><rect x="50.5" y="19.5" width="1.6" height="2" fill="#7a5030"/><rect x="50.5" y="24.5" width="1.6" height="2" fill="#7a5030"/><rect x="50.5" y="29.5" width="1.6" height="2" fill="#7a5030"/><rect x="48" y="34" width="6" height="5" fill="#7a6058"/>
<path d="M55.4 39V23L59.4 6L74 22V39Z" fill="#eeb49a"/><path d="M58 4H74V24L60 7Z" fill="#8a5a32"/><rect x="60" y="20" width="3" height="4.5" fill="#8aa0c0"/><rect x="65" y="30.5" width="3" height="4.5" fill="#8aa0c0"/><rect x="59" y="32" width="3" height="7" fill="#d8a090"/>
</svg><svg class="a" style="left:352px;top:872px" width="17" height="16"><g fill="none" stroke="#fff" stroke-width="1.1"><path d="M0.5 0V2.5H11.5V0"/><rect x="0.5" y="4.5" width="11" height="7"/><path d="M0.5 16V13.5H11.5V16"/><path d="M15 0V3M15 6V16"/></g><rect x="13.5" y="3" width="3" height="3" fill="#fff"/></svg><svg class="a" style="left:399px;top:869px" width="25" height="22"><rect x="6" y="0" width="18" height="22" rx="1.5" fill="#2b7cd3"/><rect x="6" y="5" width="18" height="6" fill="#3e8fe4" opacity="0.6"/><rect x="6" y="11" width="18" height="6" fill="#185abd"/><rect x="6" y="17" width="18" height="5" fill="#103f91"/><rect x="0" y="5" width="13" height="13" rx="1" fill="#185abd"/><text x="6.5" y="15.5" font-family="Liberation Sans" font-weight="bold" font-size="10" fill="#fff" text-anchor="middle">W</text></svg><svg class="a" style="left:448px;top:869px" width="25" height="22"><rect x="6" y="0" width="18" height="22" rx="1.5" fill="#21a366"/><rect x="15" y="0" width="9" height="11" fill="#33c481"/><rect x="6" y="11" width="18" height="11" fill="#107c41"/><rect x="0" y="5" width="13" height="13" rx="1" fill="#107c41"/><text x="6.5" y="15.5" font-family="Liberation Sans" font-weight="bold" font-size="10" fill="#fff" text-anchor="middle">X</text></svg><svg class="a" style="left:496px;top:871px" width="26" height="20"><rect x="1" y="1" width="17" height="18" rx="5" fill="#4a78c8"/><rect x="3" y="2.5" width="13" height="15" rx="3" fill="#7aa8e0"/><rect x="5" y="3.5" width="8" height="3.5" fill="#e8601c"/><rect x="5" y="8" width="8" height="3.5" fill="#f07828"/><rect x="5" y="12.5" width="8" height="3.5" fill="#e8601c"/><path d="M14 18Q16 6 22 2Q19 9 20 13Q23 11 25 12Q21 15 16 18Z" fill="#e0c890"/><path d="M18 17Q21 14 25 13" stroke="#8ab0d8" stroke-width="1" fill="none"/></svg><svg class="a" style="left:545px;top:868px" width="26" height="24"><circle cx="13.5" cy="12.5" r="8.5" fill="#3ab4ec"/><circle cx="13.5" cy="11.5" r="3.8" fill="#242a1e"/><rect x="6" y="12.3" width="15" height="2.6" fill="#3ab4ec"/><rect x="15.5" y="14.9" width="7" height="3" fill="#242a1e"/><path d="M3 22Q0 18 7 9Q16 0 22.5 1.5Q25 3 22 8" fill="none" stroke="#e8c030" stroke-width="1.7"/></svg><svg class="a" style="left:594px;top:871px" width="30" height="18"><path d="M6 7Q12 2 20 3L23 1L22 6Q23 11 18 13Q11 15 6 12Z" fill="#8c8878"/><circle cx="11" cy="6.5" r="2.2" fill="#eee"/><circle cx="15.5" cy="6.5" r="2.2" fill="#eee"/><circle cx="11.3" cy="6.8" r="1" fill="#222"/><circle cx="15.8" cy="6.8" r="1" fill="#222"/><circle cx="4" cy="8" r="2.6" fill="#111"/><circle cx="3.3" cy="7.2" r="0.8" fill="#ddd"/><path d="M15 11L23 14" stroke="#c87a30" stroke-width="1.5"/><path d="M22 13.5L26 16" stroke="#ccc" stroke-width="2"/></svg><svg class="a" style="left:644px;top:868px" width="24" height="24"><circle cx="11.6" cy="13" r="10.5" fill="#ff6a2a"/><path d="M2 10Q3 3 9 2Q6 6 8 7Q11 3 15 2Q14 5 16 7Q19 1 19 1Q24 6 22 13Q20 6 15 5Z" fill="#ffb43a"/><path d="M4 18Q9 24 16 22Q21 20 22 14Q19 20 12 19Q6 18 4 14Z" fill="#e8244a"/><circle cx="12" cy="12.5" r="5" fill="#7a3ac8"/><path d="M8 10Q10 7 13 8Q11 9 11 11Z" fill="#ff8a3a"/></svg><svg class="a" style="left:692px;top:867px" width="26" height="26"><defs><linearGradient id="eg" x1="0" y1="0" x2="1" y2="1"><stop offset="0" stop-color="#2aa8e0"/><stop offset="1" stop-color="#1a5ab8"/></linearGradient><linearGradient id="eg2" x1="0" y1="0" x2="1" y2="0.6"><stop offset="0" stop-color="#30b8d8"/><stop offset="1" stop-color="#50d070"/></linearGradient></defs><circle cx="13" cy="13" r="12.3" fill="url(#eg)"/><path d="M1.5 10Q4 1 13 0.7Q23 1 25.3 11Q25.5 17 19 17.5Q14 17.5 15.5 13Q16 9 11 9Q5 9.5 1.5 13Z" fill="url(#eg2)"/><circle cx="11.5" cy="14" r="3.6" fill="#242a1e"/><path d="M9 19Q12 23 20 21" stroke="#1450a0" stroke-width="2" fill="none"/></svg><svg class="a" style="left:742px;top:871px" width="24" height="20"><path d="M1 2H9L11 4H23V19H1Z" fill="#e8b838"/><rect x="1" y="6" width="22" height="13" fill="#f8d468"/><path d="M7 19V12H17V19" fill="none" stroke="#2a7ad8" stroke-width="3"/><rect x="7" y="11" width="10" height="3" fill="#2a7ad8"/></svg><div class="a" style="left:780px;top:860px;width:46px;height:40px;background:#4a5044"></div><div class="a" style="left:780px;top:898px;width:46px;height:2px;background:#76b9ed"></div><div class="a" style="left:832px;top:898px;width:41px;height:2px;background:#76b9ed"></div><svg class="a" style="left:791px;top:868px" width="25" height="25"><rect x="0.5" y="0.5" width="24" height="24" fill="#c8c8c8" stroke="#808080"/><rect x="2" y="2" width="10" height="13" fill="#101010"/><rect x="4" y="3" width="6" height="2.5" fill="#30c030"/><rect x="4" y="6" width="6" height="2.5" fill="#e03030"/><rect x="4" y="9" width="6" height="2.5" fill="#e8e030"/><circle cx="18" cy="8" r="4.5" fill="#202020"/><circle cx="18" cy="8" r="2.5" fill="#60a0d0"/><path d="M1 24V15Q6 13 10 17V24Z" fill="#f0e020"/><path d="M13 23L22 14" stroke="#303030" stroke-width="2"/></svg><svg class="a" style="left:839px;top:866px" width="26" height="26"><path d="M4.5 13.5A8.5 8.5 0 0 1 21.5 13.5" fill="none" stroke="#0c10d8" stroke-width="2.6"/><ellipse cx="13" cy="16" rx="6" ry="7" fill="#f0b030"/><ellipse cx="13" cy="16" rx="3" ry="5.5" fill="#e89020"/><path d="M7 15.5L9 16.5L10.5 14.5L12 17L13.5 14.5L15 17L16.5 15L19 16" stroke="#e82010" stroke-width="1.8" fill="none"/><ellipse cx="4.8" cy="16.5" rx="3" ry="5.5" fill="#0c10d8"/><ellipse cx="21.2" cy="16.5" rx="3" ry="5.5" fill="#0c10d8"/></svg><svg class="a" style="left:1196px;top:868px" width="26" height="24"><g fill="#e0502a"><rect x="2" y="12" width="3.5" height="11"/><rect x="7" y="15" width="3.5" height="8"/><rect x="12" y="18" width="3.5" height="5"/><rect x="17" y="21" width="3" height="2"/><path d="M1 3L3 1L15 11L17 8L22 15L14 15L16 13Z"/></g></svg><div class="t" style="left:1228px;top:873px;font-size:14px;color:#fff;letter-spacing:-0.3px">DAX</div><div class="t" style="left:1264px;top:873px;font-size:14px;color:#e8624a;letter-spacing:-0.4px">-0,52%</div><svg class="a" style="left:1330px;top:875px" width="13" height="8"><path d="M0.5 7L6.5 1L12.5 7" fill="none" stroke="#fff" stroke-width="1.3"/></svg><svg class="a" style="left:1354px;top:871px" width="14" height="18"><g fill="none" stroke="#fff" stroke-width="1.1"><path d="M2 3Q2 0.5 7 0.5Q12 0.5 12 3"/><path d="M2 15Q2 17.5 7 17.5Q12 17.5 12 15"/><rect x="1" y="5" width="8" height="8" rx="1"/><path d="M9 8L13 6V12L9 10"/></g></svg><svg class="a" style="left:1376px;top:872px" width="18" height="16"><g fill="none" stroke="#fff" stroke-width="1.1"><path d="M3 1V5M6 1V5M1.5 5H7.5V8Q7.5 10 4.5 10Q1.5 10 1.5 8Z M4.5 10V15"/><rect x="7.5" y="5" width="10" height="8"/><path d="M10 7L15 11M15 7L10 11"/></g></svg><svg class="a" style="left:1400px;top:871px" width="18" height="18"><path d="M1 6H4.5L9 1.5V16.5L4.5 12H1Z" fill="none" stroke="#fff" stroke-width="1.1"/><path d="M11 6.5Q12.5 9 11 11.5M13 4.5Q16 9 13 13.5M15 2.5Q19.5 9 15 15.5" fill="none" stroke="#fff" stroke-width="1.1"/></svg><svg class="a" style="left:1425px;top:872px" width="18" height="17"><g fill="none" stroke="#fff" stroke-width="1.1"><path d="M1 16Q1 4 16 1"/><path d="M4.5 16Q4.5 7.5 16 5"/><path d="M8 16Q8 11 16 9"/><path d="M11.5 16Q11.5 14 16 13"/></g><circle cx="15" cy="15" r="1.6" fill="#fff"/></svg><div class="t" style="left:1452px;top:874px;color:#fff;letter-spacing:-0.2px">DEU</div><div class="t" style="left:1496px;top:866px;color:#fff;letter-spacing:-0.2px">16:09</div><div class="t" style="left:1487px;top:883px;color:#fff;letter-spacing:-0.4px">17.08.2023</div><svg class="a" style="left:1558px;top:871px" width="19" height="19"><path d="M1 1H17V13H8L4 17V13H1Z" fill="#fff"/><path d="M4 4.5H14M4 7.5H14M4 10.5H11" stroke="#242a1e" stroke-width="1"/></svg><div class="a" style="left:1597px;top:860px;width:1px;height:40px;background:#5a6050"></div></body></html>
